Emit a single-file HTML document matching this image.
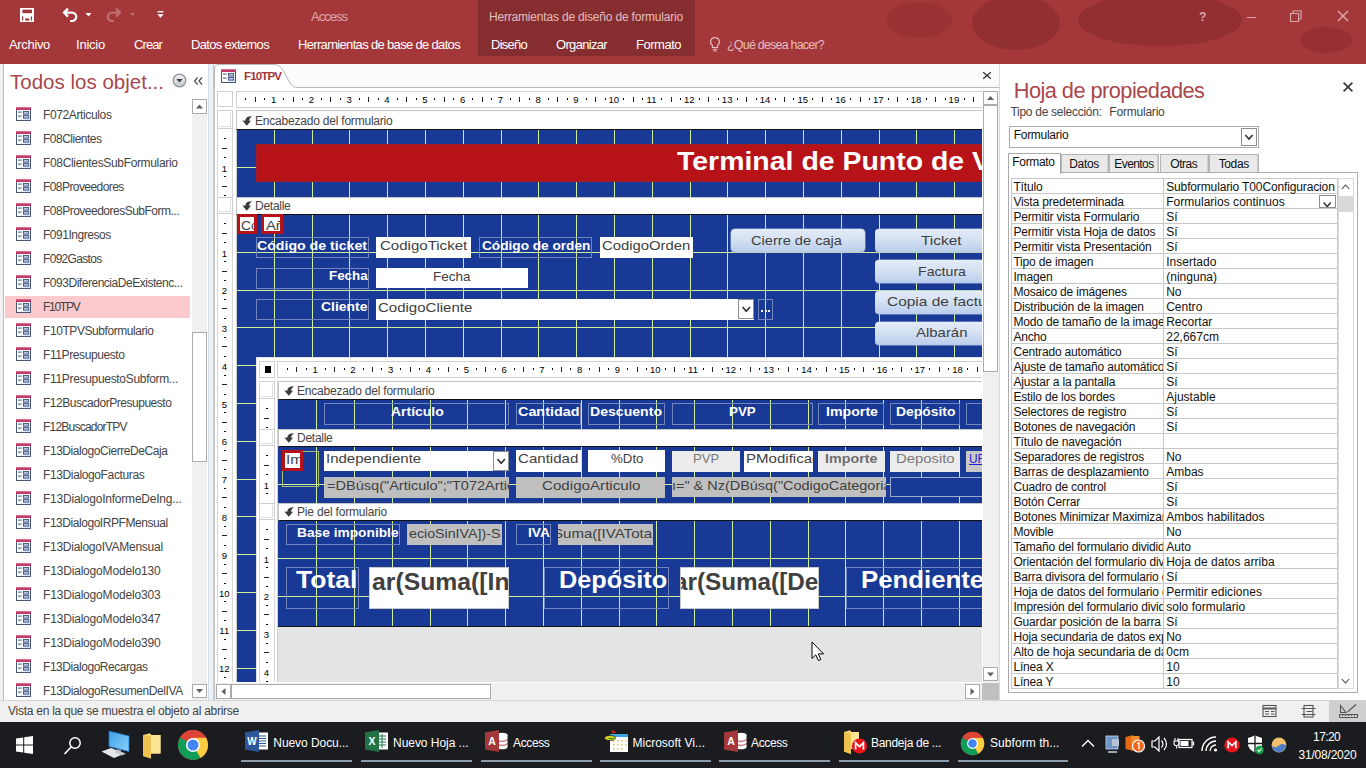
<!DOCTYPE html>
<html><head><meta charset="utf-8"><title>Access</title>
<style>
html,body{margin:0;padding:0;}
body{width:1366px;height:768px;overflow:hidden;position:relative;background:#fff;font-family:"Liberation Sans",sans-serif;}
div,span,svg{position:absolute;box-sizing:border-box;}
.t{white-space:nowrap;display:block;}
.clip{overflow:hidden;}
</style></head><body>

<svg width="0" height="0" style="left:0;top:0"><defs>
<linearGradient id="gfi" x1="0" y1="0" x2="1" y2="1"><stop offset="0" stop-color="#ffffff"/><stop offset="0.55" stop-color="#fbfcff"/><stop offset="1" stop-color="#c9daf2"/></linearGradient>
<symbol id="fi" viewBox="0 0 15 14">
<rect x="0.5" y="0.5" width="14" height="13" fill="url(#gfi)" stroke="#4a5573" stroke-width="1"/>
<rect x="0" y="0" width="15" height="3" fill="#c43a68"/>
<rect x="0" y="0" width="15" height="1" fill="#d9688d"/>
<rect x="2" y="4.6" width="3.6" height="1" fill="#44547c"/>
<rect x="2" y="8.6" width="3.6" height="1" fill="#44547c"/>
<rect x="7.5" y="4.5" width="5" height="2.6" fill="#b9c9e8" stroke="#44547c" stroke-width="0.9"/>
<rect x="7.5" y="8.5" width="5" height="2.6" fill="#b9c9e8" stroke="#44547c" stroke-width="0.9"/>
</symbol>
<symbol id="sel" viewBox="0 0 10 10">
<path d="M10 0.3 Q5.6 0 4 2.2 L3.1 4.7 L0.3 4.4 L4.8 9.7 L9.3 4.6 L7 4.9 Q7.2 1.8 10 0.3 Z" fill="#3b3b3b"/>
</symbol>
</defs></svg>
<div style="left:0px;top:0px;width:1366px;height:64px;background:#A4373A;"></div>
<div class="clip" style="left:860px;top:0;width:506px;height:57px;">
<div style="left:26px;top:2px;width:66px;height:36px;border-radius:50%;background:rgba(60,10,12,0.10);"></div>
<div style="left:112px;top:-4px;width:88px;height:54px;border-radius:50%;background:rgba(60,10,12,0.17);"></div>
<div style="left:218px;top:-6px;width:164px;height:52px;border-radius:50%;background:rgba(60,10,12,0.17);"></div>
<div style="left:440px;top:27px;width:52px;height:26px;border-radius:50%;background:rgba(60,10,12,0.13);"></div>
</div>
<div style="left:478px;top:0px;width:217px;height:56px;background:#862D30;"></div>
<svg style="left:0;top:0" width="200" height="32" viewBox="0 0 200 32">
<rect x="20" y="8" width="14" height="14" fill="#fff"/>
<rect x="22.4" y="9.6" width="9.6" height="3.6" fill="#A4373A"/>
<rect x="22" y="16.400" width="1.200" height="4.200" fill="#A4373A"/><rect x="30.800" y="16.400" width="1.200" height="4.200" fill="#A4373A"/>
<rect x="25.200" y="18.400" width="4" height="2.200" fill="#A4373A"/>
<path d="M68 8.6 L64 12.6 L68 16.6 M64.4 12.6 H72 a4.2 4.2 0 0 1 0 8.4 H70" fill="none" stroke="#fff" stroke-width="2.2"/>
<path d="M85.5 13 h6 l-3 3.4z" fill="#fff"/>
<g opacity="0.28"><path d="M116 8.6 L120 12.6 L116 16.6 M119.6 12.6 H112 a4.2 4.2 0 0 0 0 8.4 H114" fill="none" stroke="#fff" stroke-width="2.2"/>
<path d="M130 13 h5 l-2.5 3z" fill="#fff"/></g>
<rect x="157.5" y="11" width="6" height="1.4" fill="#fff"/>
<path d="M157.2 14.2 h6.6 l-3.3 3.6z" fill="#fff"/>
</svg>
<span class="t" style="font-size:13px;line-height:13px;color:#DDA9AB;letter-spacing:-0.983px;left:311.00px;top:9.85px;">Access</span>
<span class="t" style="font-size:12px;line-height:12px;color:#E3BEBF;letter-spacing:-0.188px;left:489.00px;top:11.19px;">Herramientas de diseño de formulario</span>
<span class="t" style="font-size:13px;line-height:13px;color:#fff;letter-spacing:-0.335px;left:9.00px;top:38.35px;">Archivo</span>
<span class="t" style="font-size:13px;line-height:13px;color:#fff;letter-spacing:-0.224px;left:76.00px;top:38.35px;">Inicio</span>
<span class="t" style="font-size:13px;line-height:13px;color:#fff;letter-spacing:-0.901px;left:134.00px;top:38.35px;">Crear</span>
<span class="t" style="font-size:13px;line-height:13px;color:#fff;letter-spacing:-0.674px;left:191.00px;top:38.35px;">Datos externos</span>
<span class="t" style="font-size:13px;line-height:13px;color:#fff;letter-spacing:-0.668px;left:298.00px;top:38.35px;">Herramientas de base de datos</span>
<span class="t" style="font-size:13px;line-height:13px;color:#fff;letter-spacing:-0.744px;left:491.00px;top:38.35px;">Diseño</span>
<span class="t" style="font-size:13px;line-height:13px;color:#fff;letter-spacing:-0.675px;left:556.00px;top:38.35px;">Organizar</span>
<span class="t" style="font-size:13px;line-height:13px;color:#fff;letter-spacing:-0.486px;left:636.00px;top:38.35px;">Formato</span>
<svg style="left:708px;top:36px" width="14" height="18" viewBox="0 0 14 18"><path d="M7 1.5 a4.3 4.3 0 0 1 2.6 7.8 v2.2 h-5.2 v-2.2 A4.3 4.3 0 0 1 7 1.5z M4.8 13.3 h4.4 M5.3 15 h3.4" fill="none" stroke="#E8C7C8" stroke-width="1.1"/></svg>
<span class="t" style="font-size:12.5px;line-height:12.5px;color:#E3BEBF;letter-spacing:-0.793px;left:727.00px;top:38.77px;">¿Qué desea hacer?</span>
<span class="t" style="font-size:12px;line-height:12px;color:#D9A6A8;font-weight:bold;left:1199.00px;top:11.19px;">?</span>
<div style="left:1246.5px;top:16.5px;width:9px;height:1.4px;background:#D9A6A8;"></div>
<svg style="left:1288px;top:8px" width="16" height="16" viewBox="0 0 16 16"><path d="M2.5 5.5 h8 v8 h-8z M5 5.3 V3 h8 v8 h-2.3" fill="none" stroke="#D9A6A8" stroke-width="1.2"/></svg>
<svg style="left:1336px;top:9px" width="14" height="14" viewBox="0 0 14 14"><path d="M2 2 L12 12 M12 2 L2 12" fill="none" stroke="#D9A6A8" stroke-width="1.5"/></svg>
<div style="left:0px;top:64px;width:214px;height:636px;background:#fff;"></div>
<div style="left:0px;top:64px;width:3px;height:636px;background:#F1F1F1;"></div>
<div style="left:3px;top:64px;width:1px;height:636px;background:#BDBDBD;"></div>
<span class="t" style="font-size:20.5px;line-height:20.5px;color:#A8474B;letter-spacing:0.009px;left:10.00px;top:72.30px;">Todos los objet...</span>
<svg style="left:172px;top:73px" width="15" height="15" viewBox="0 0 15 15"><defs><linearGradient id="gc" x1="0" y1="0" x2="0" y2="1"><stop offset="0" stop-color="#f4f4f7"/><stop offset="1" stop-color="#c3c6cf"/></linearGradient></defs><circle cx="7.5" cy="7.5" r="6.3" fill="url(#gc)" stroke="#8d9099" stroke-width="1.2"/><path d="M4.4 6 h6.2 l-3.1 3.6z" fill="#3c3c3c"/></svg>
<svg style="left:193px;top:76px" width="11" height="10" viewBox="0 0 11 10"><path d="M4.6 1.4 L1.6 5 L4.6 8.6 M9 1.4 L6 5 L9 8.6" fill="none" stroke="#444" stroke-width="1.2"/></svg>
<svg style="left:16px;top:107px" width="15" height="14"><use href="#fi"/></svg>
<span class="t" style="font-size:12px;line-height:12px;color:#444;letter-spacing:-0.374px;left:43.00px;top:109.19px;">F072Articulos</span>
<svg style="left:16px;top:131px" width="15" height="14"><use href="#fi"/></svg>
<span class="t" style="font-size:12px;line-height:12px;color:#444;letter-spacing:-0.503px;left:43.00px;top:133.19px;">F08Clientes</span>
<svg style="left:16px;top:155px" width="15" height="14"><use href="#fi"/></svg>
<span class="t" style="font-size:12px;line-height:12px;color:#444;letter-spacing:-0.339px;left:43.00px;top:157.19px;">F08ClientesSubFormulario</span>
<svg style="left:16px;top:179px" width="15" height="14"><use href="#fi"/></svg>
<span class="t" style="font-size:12px;line-height:12px;color:#444;letter-spacing:-0.573px;left:43.00px;top:181.19px;">F08Proveedores</span>
<svg style="left:16px;top:203px" width="15" height="14"><use href="#fi"/></svg>
<span class="t" style="font-size:12px;line-height:12px;color:#444;letter-spacing:-0.503px;left:43.00px;top:205.19px;">F08ProveedoresSubForm...</span>
<svg style="left:16px;top:227px" width="15" height="14"><use href="#fi"/></svg>
<span class="t" style="font-size:12px;line-height:12px;color:#444;letter-spacing:-0.473px;left:43.00px;top:229.19px;">F091Ingresos</span>
<svg style="left:16px;top:251px" width="15" height="14"><use href="#fi"/></svg>
<span class="t" style="font-size:12px;line-height:12px;color:#444;letter-spacing:-0.687px;left:43.00px;top:253.19px;">F092Gastos</span>
<svg style="left:16px;top:275px" width="15" height="14"><use href="#fi"/></svg>
<span class="t" style="font-size:12px;line-height:12px;color:#444;letter-spacing:-0.473px;left:43.00px;top:277.19px;">F093DiferenciaDeExistenc...</span>
<div style="left:5px;top:296px;width:185px;height:22px;background:#FCC9CD;"></div>
<svg style="left:16px;top:299px" width="15" height="14"><use href="#fi"/></svg>
<span class="t" style="font-size:12px;line-height:12px;color:#444;letter-spacing:-1.269px;left:43.00px;top:301.19px;">F10TPV</span>
<svg style="left:16px;top:323px" width="15" height="14"><use href="#fi"/></svg>
<span class="t" style="font-size:12px;line-height:12px;color:#444;letter-spacing:-0.427px;left:43.00px;top:325.19px;">F10TPVSubformulario</span>
<svg style="left:16px;top:347px" width="15" height="14"><use href="#fi"/></svg>
<span class="t" style="font-size:12px;line-height:12px;color:#444;letter-spacing:-0.404px;left:43.00px;top:349.19px;">F11Presupuesto</span>
<svg style="left:16px;top:371px" width="15" height="14"><use href="#fi"/></svg>
<span class="t" style="font-size:12px;line-height:12px;color:#444;letter-spacing:-0.317px;left:43.00px;top:373.19px;">F11PresupuestoSubform...</span>
<svg style="left:16px;top:395px" width="15" height="14"><use href="#fi"/></svg>
<span class="t" style="font-size:12px;line-height:12px;color:#444;letter-spacing:-0.470px;left:43.00px;top:397.19px;">F12BuscadorPresupuesto</span>
<svg style="left:16px;top:419px" width="15" height="14"><use href="#fi"/></svg>
<span class="t" style="font-size:12px;line-height:12px;color:#444;letter-spacing:-0.779px;left:43.00px;top:421.19px;">F12BuscadorTPV</span>
<svg style="left:16px;top:443px" width="15" height="14"><use href="#fi"/></svg>
<span class="t" style="font-size:12px;line-height:12px;color:#444;letter-spacing:-0.439px;left:43.00px;top:445.19px;">F13DialogoCierreDeCaja</span>
<svg style="left:16px;top:467px" width="15" height="14"><use href="#fi"/></svg>
<span class="t" style="font-size:12px;line-height:12px;color:#444;letter-spacing:-0.375px;left:43.00px;top:469.19px;">F13DialogoFacturas</span>
<svg style="left:16px;top:491px" width="15" height="14"><use href="#fi"/></svg>
<span class="t" style="font-size:12px;line-height:12px;color:#444;letter-spacing:-0.219px;left:43.00px;top:493.19px;">F13DialogoInformeDeIng...</span>
<svg style="left:16px;top:515px" width="15" height="14"><use href="#fi"/></svg>
<span class="t" style="font-size:12px;line-height:12px;color:#444;letter-spacing:-0.450px;left:43.00px;top:517.19px;">F13DialogoIRPFMensual</span>
<svg style="left:16px;top:539px" width="15" height="14"><use href="#fi"/></svg>
<span class="t" style="font-size:12px;line-height:12px;color:#444;letter-spacing:-0.269px;left:43.00px;top:541.19px;">F13DialogoIVAMensual</span>
<svg style="left:16px;top:563px" width="15" height="14"><use href="#fi"/></svg>
<span class="t" style="font-size:12px;line-height:12px;color:#444;letter-spacing:-0.176px;left:43.00px;top:565.19px;">F13DialogoModelo130</span>
<svg style="left:16px;top:587px" width="15" height="14"><use href="#fi"/></svg>
<span class="t" style="font-size:12px;line-height:12px;color:#444;letter-spacing:-0.176px;left:43.00px;top:589.19px;">F13DialogoModelo303</span>
<svg style="left:16px;top:611px" width="15" height="14"><use href="#fi"/></svg>
<span class="t" style="font-size:12px;line-height:12px;color:#444;letter-spacing:-0.176px;left:43.00px;top:613.19px;">F13DialogoModelo347</span>
<svg style="left:16px;top:635px" width="15" height="14"><use href="#fi"/></svg>
<span class="t" style="font-size:12px;line-height:12px;color:#444;letter-spacing:-0.176px;left:43.00px;top:637.19px;">F13DialogoModelo390</span>
<svg style="left:16px;top:659px" width="15" height="14"><use href="#fi"/></svg>
<span class="t" style="font-size:12px;line-height:12px;color:#444;letter-spacing:-0.451px;left:43.00px;top:661.19px;">F13DialogoRecargas</span>
<svg style="left:16px;top:683px" width="15" height="14"><use href="#fi"/></svg>
<span class="t" style="font-size:12px;line-height:12px;color:#444;letter-spacing:-0.408px;left:43.00px;top:685.19px;">F13DialogoResumenDelIVA</span>
<div style="left:192px;top:99px;width:15px;height:601px;background:#F0F0F0;"></div>
<div style="left:192px;top:99px;width:15px;height:15px;background:#fff;border:1px solid #ABABAB;"></div>
<svg style="left:192px;top:99px" width="15" height="15"><path d="M4 9.5 L7.5 5.5 L11 9.5z" fill="#606060"/></svg>
<div style="left:192px;top:332px;width:15px;height:130px;background:#fff;border:1px solid #ABABAB;"></div>
<div style="left:192px;top:684px;width:15px;height:14px;background:#fff;border:1px solid #ABABAB;"></div>
<svg style="left:192px;top:684px" width="15" height="14"><path d="M4 5 L7.5 9 L11 5z" fill="#606060"/></svg>
<div style="left:208px;top:64px;width:1px;height:636px;background:#D5DCE4;"></div>
<div style="left:209px;top:64px;width:4px;height:636px;background:#EEF2F7;"></div>
<div style="left:213px;top:64px;width:1px;height:636px;background:#C4CAD2;"></div>
<div style="left:214px;top:64px;width:786px;height:636px;background:#fff;"></div>
<div style="left:214px;top:64px;width:786px;height:24px;background:#FBFBFB;"></div>
<svg style="left:214px;top:64px" width="790" height="26" viewBox="0 0 790 26">
<path d="M0.5 26 V4 Q0.5 0.5 4 0.5 H60 Q66 0.5 69.5 7 L76 19 Q78.5 23.5 84 23.5 H786" fill="#fff" stroke="#B9B9B9" stroke-width="1"/>
<rect x="1" y="24" width="82" height="2" fill="#fff"/>
<path d="M0.5 26 V5" stroke="#B9B9B9"/>
</svg>
<svg style="left:221px;top:69px" width="15" height="14"><use href="#fi"/></svg>
<span class="t" style="font-size:11.5px;line-height:11.5px;color:#A23438;font-weight:bold;letter-spacing:-0.864px;left:244.00px;top:70.62px;">F10TPV</span>
<svg style="left:982px;top:70px" width="10" height="10" viewBox="0 0 10 10"><path d="M1.2 2.2 L8.8 8.8 M8.8 2.2 L1.2 8.8" stroke="#333" stroke-width="1.3"/></svg>
<div style="left:214px;top:88px;width:1px;height:612px;background:#C9C9C9;"></div>
<div style="left:217px;top:91px;width:16px;height:16px;background:#fff;border:1px solid #CFCFCF;"></div>
<div style="left:236px;top:91px;width:746px;height:17px;background:#fff;border:0;border-top:1px solid #CFCFCF;border-bottom:1px solid #CFCFCF;border-left:1px solid #CFCFCF;"></div>
<div style="left:244.8px;top:98.3px;width:1.7px;height:1.9px;background:#000;"></div>
<div style="left:255px;top:97px;width:1px;height:5px;background:#222;"></div>
<div style="left:263.8px;top:98.3px;width:1.7px;height:1.9px;background:#000;"></div>
<span class="t" style="font-size:9.5px;line-height:9.5px;color:#000;left:270.95px;top:95.31px;">1</span>
<div style="left:282.8px;top:98.3px;width:1.7px;height:1.9px;background:#000;"></div>
<div style="left:293px;top:97px;width:1px;height:5px;background:#222;"></div>
<div style="left:301.8px;top:98.3px;width:1.7px;height:1.9px;background:#000;"></div>
<span class="t" style="font-size:9.5px;line-height:9.5px;color:#000;left:308.75px;top:95.31px;">2</span>
<div style="left:320.8px;top:98.3px;width:1.7px;height:1.9px;background:#000;"></div>
<div style="left:330px;top:97px;width:1px;height:5px;background:#222;"></div>
<div style="left:339.8px;top:98.3px;width:1.7px;height:1.9px;background:#000;"></div>
<span class="t" style="font-size:9.5px;line-height:9.5px;color:#000;left:346.54px;top:95.31px;">3</span>
<div style="left:358.8px;top:98.3px;width:1.7px;height:1.9px;background:#000;"></div>
<div style="left:368px;top:97px;width:1px;height:5px;background:#222;"></div>
<div style="left:377.8px;top:98.3px;width:1.7px;height:1.9px;background:#000;"></div>
<span class="t" style="font-size:9.5px;line-height:9.5px;color:#000;left:384.34px;top:95.31px;">4</span>
<div style="left:396.8px;top:98.3px;width:1.7px;height:1.9px;background:#000;"></div>
<div style="left:406px;top:97px;width:1px;height:5px;background:#222;"></div>
<div style="left:415.8px;top:98.3px;width:1.7px;height:1.9px;background:#000;"></div>
<span class="t" style="font-size:9.5px;line-height:9.5px;color:#000;left:422.13px;top:95.31px;">5</span>
<div style="left:433.8px;top:98.3px;width:1.7px;height:1.9px;background:#000;"></div>
<div style="left:444px;top:97px;width:1px;height:5px;background:#222;"></div>
<div style="left:452.8px;top:98.3px;width:1.7px;height:1.9px;background:#000;"></div>
<span class="t" style="font-size:9.5px;line-height:9.5px;color:#000;left:459.93px;top:95.31px;">6</span>
<div style="left:471.8px;top:98.3px;width:1.7px;height:1.9px;background:#000;"></div>
<div style="left:482px;top:97px;width:1px;height:5px;background:#222;"></div>
<div style="left:490.8px;top:98.3px;width:1.7px;height:1.9px;background:#000;"></div>
<span class="t" style="font-size:9.5px;line-height:9.5px;color:#000;left:497.72px;top:95.31px;">7</span>
<div style="left:509.8px;top:98.3px;width:1.7px;height:1.9px;background:#000;"></div>
<div style="left:519px;top:97px;width:1px;height:5px;background:#222;"></div>
<div style="left:528.8px;top:98.3px;width:1.7px;height:1.9px;background:#000;"></div>
<span class="t" style="font-size:9.5px;line-height:9.5px;color:#000;left:535.52px;top:95.31px;">8</span>
<div style="left:547.8px;top:98.3px;width:1.7px;height:1.9px;background:#000;"></div>
<div style="left:557px;top:97px;width:1px;height:5px;background:#222;"></div>
<div style="left:566.8px;top:98.3px;width:1.7px;height:1.9px;background:#000;"></div>
<span class="t" style="font-size:9.5px;line-height:9.5px;color:#000;left:573.31px;top:95.31px;">9</span>
<div style="left:585.8px;top:98.3px;width:1.7px;height:1.9px;background:#000;"></div>
<div style="left:595px;top:97px;width:1px;height:5px;background:#222;"></div>
<div style="left:604.8px;top:98.3px;width:1.7px;height:1.9px;background:#000;"></div>
<span class="t" style="font-size:9.5px;line-height:9.5px;color:#000;left:608.47px;top:95.31px;">10</span>
<div style="left:622.8px;top:98.3px;width:1.7px;height:1.9px;background:#000;"></div>
<div style="left:633px;top:97px;width:1px;height:5px;background:#222;"></div>
<div style="left:641.8px;top:98.3px;width:1.7px;height:1.9px;background:#000;"></div>
<span class="t" style="font-size:9.5px;line-height:9.5px;color:#000;left:646.61px;top:95.31px;">11</span>
<div style="left:660.8px;top:98.3px;width:1.7px;height:1.9px;background:#000;"></div>
<div style="left:671px;top:97px;width:1px;height:5px;background:#222;"></div>
<div style="left:679.8px;top:98.3px;width:1.7px;height:1.9px;background:#000;"></div>
<span class="t" style="font-size:9.5px;line-height:9.5px;color:#000;left:684.06px;top:95.31px;">12</span>
<div style="left:698.8px;top:98.3px;width:1.7px;height:1.9px;background:#000;"></div>
<div style="left:708px;top:97px;width:1px;height:5px;background:#222;"></div>
<div style="left:717.8px;top:98.3px;width:1.7px;height:1.9px;background:#000;"></div>
<span class="t" style="font-size:9.5px;line-height:9.5px;color:#000;left:721.85px;top:95.31px;">13</span>
<div style="left:736.8px;top:98.3px;width:1.7px;height:1.9px;background:#000;"></div>
<div style="left:746px;top:97px;width:1px;height:5px;background:#222;"></div>
<div style="left:755.8px;top:98.3px;width:1.7px;height:1.9px;background:#000;"></div>
<span class="t" style="font-size:9.5px;line-height:9.5px;color:#000;left:759.65px;top:95.31px;">14</span>
<div style="left:774.8px;top:98.3px;width:1.7px;height:1.9px;background:#000;"></div>
<div style="left:784px;top:97px;width:1px;height:5px;background:#222;"></div>
<div style="left:792.8px;top:98.3px;width:1.7px;height:1.9px;background:#000;"></div>
<span class="t" style="font-size:9.5px;line-height:9.5px;color:#000;left:797.44px;top:95.31px;">15</span>
<div style="left:811.8px;top:98.3px;width:1.7px;height:1.9px;background:#000;"></div>
<div style="left:822px;top:97px;width:1px;height:5px;background:#222;"></div>
<div style="left:830.8px;top:98.3px;width:1.7px;height:1.9px;background:#000;"></div>
<span class="t" style="font-size:9.5px;line-height:9.5px;color:#000;left:835.24px;top:95.31px;">16</span>
<div style="left:849.8px;top:98.3px;width:1.7px;height:1.9px;background:#000;"></div>
<div style="left:860px;top:97px;width:1px;height:5px;background:#222;"></div>
<div style="left:868.8px;top:98.3px;width:1.7px;height:1.9px;background:#000;"></div>
<span class="t" style="font-size:9.5px;line-height:9.5px;color:#000;left:873.03px;top:95.31px;">17</span>
<div style="left:887.8px;top:98.3px;width:1.7px;height:1.9px;background:#000;"></div>
<div style="left:897px;top:97px;width:1px;height:5px;background:#222;"></div>
<div style="left:906.8px;top:98.3px;width:1.7px;height:1.9px;background:#000;"></div>
<span class="t" style="font-size:9.5px;line-height:9.5px;color:#000;left:910.83px;top:95.31px;">18</span>
<div style="left:925.8px;top:98.3px;width:1.7px;height:1.9px;background:#000;"></div>
<div style="left:935px;top:97px;width:1px;height:5px;background:#222;"></div>
<div style="left:944.8px;top:98.3px;width:1.7px;height:1.9px;background:#000;"></div>
<span class="t" style="font-size:9.5px;line-height:9.5px;color:#000;left:948.62px;top:95.31px;">19</span>
<div style="left:963.8px;top:98.3px;width:1.7px;height:1.9px;background:#000;"></div>
<div style="left:973px;top:97px;width:1px;height:5px;background:#222;"></div>
<div style="left:217px;top:110px;width:16px;height:572px;background:#fff;border:0;border-left:1px solid #D6D6D6;border-right:1px solid #D6D6D6;"></div>
<div style="left:217px;top:110px;width:16px;height:19px;background:#fff;border:1px solid #CFCFCF;"></div>
<div style="left:219px;top:112px;width:12px;height:15px;background:#fff;border:0;border-right:1px solid #DDD;border-bottom:1px solid #DDD;"></div>
<div style="left:217px;top:197px;width:16px;height:17px;background:#fff;border:1px solid #CFCFCF;"></div>
<div style="left:219px;top:199px;width:12px;height:13px;background:#fff;border:0;border-right:1px solid #DDD;border-bottom:1px solid #DDD;"></div>
<div style="left:223.8px;top:137.8px;width:1.8px;height:1.7px;background:#000;"></div>
<div style="left:222px;top:148px;width:5px;height:1px;background:#222;"></div>
<div style="left:223.8px;top:156.8px;width:1.8px;height:1.7px;background:#000;"></div>
<span class="t" style="font-size:9.5px;line-height:9.5px;color:#000;left:221.66px;top:163.50px;">1</span>
<div style="left:223.8px;top:175.8px;width:1.8px;height:1.7px;background:#000;"></div>
<div style="left:222px;top:186px;width:5px;height:1px;background:#222;"></div>
<div style="left:223.8px;top:194.8px;width:1.8px;height:1.7px;background:#000;"></div>
<div style="left:223.8px;top:222.8px;width:1.8px;height:1.7px;background:#000;"></div>
<div style="left:222px;top:233px;width:5px;height:1px;background:#222;"></div>
<div style="left:223.8px;top:241.8px;width:1.8px;height:1.7px;background:#000;"></div>
<span class="t" style="font-size:9.5px;line-height:9.5px;color:#000;left:221.66px;top:248.50px;">1</span>
<div style="left:223.8px;top:260.8px;width:1.8px;height:1.7px;background:#000;"></div>
<div style="left:222px;top:271px;width:5px;height:1px;background:#222;"></div>
<div style="left:223.8px;top:279.8px;width:1.8px;height:1.7px;background:#000;"></div>
<span class="t" style="font-size:9.5px;line-height:9.5px;color:#000;left:221.66px;top:286.30px;">2</span>
<div style="left:223.8px;top:298.8px;width:1.8px;height:1.7px;background:#000;"></div>
<div style="left:222px;top:308px;width:5px;height:1px;background:#222;"></div>
<div style="left:223.8px;top:317.8px;width:1.8px;height:1.7px;background:#000;"></div>
<span class="t" style="font-size:9.5px;line-height:9.5px;color:#000;left:221.66px;top:324.09px;">3</span>
<div style="left:223.8px;top:336.8px;width:1.8px;height:1.7px;background:#000;"></div>
<div style="left:222px;top:346px;width:5px;height:1px;background:#222;"></div>
<div style="left:223.8px;top:355.8px;width:1.8px;height:1.7px;background:#000;"></div>
<span class="t" style="font-size:9.5px;line-height:9.5px;color:#000;left:221.66px;top:361.89px;">4</span>
<div style="left:223.8px;top:374.8px;width:1.8px;height:1.7px;background:#000;"></div>
<div style="left:222px;top:384px;width:5px;height:1px;background:#222;"></div>
<div style="left:223.8px;top:393.8px;width:1.8px;height:1.7px;background:#000;"></div>
<span class="t" style="font-size:9.5px;line-height:9.5px;color:#000;left:221.66px;top:399.68px;">5</span>
<div style="left:223.8px;top:411.8px;width:1.8px;height:1.7px;background:#000;"></div>
<div style="left:222px;top:422px;width:5px;height:1px;background:#222;"></div>
<div style="left:223.8px;top:430.8px;width:1.8px;height:1.7px;background:#000;"></div>
<span class="t" style="font-size:9.5px;line-height:9.5px;color:#000;left:221.66px;top:437.48px;">6</span>
<div style="left:223.8px;top:449.8px;width:1.8px;height:1.7px;background:#000;"></div>
<div style="left:222px;top:460px;width:5px;height:1px;background:#222;"></div>
<div style="left:223.8px;top:468.8px;width:1.8px;height:1.7px;background:#000;"></div>
<span class="t" style="font-size:9.5px;line-height:9.5px;color:#000;left:221.66px;top:475.27px;">7</span>
<div style="left:223.8px;top:487.8px;width:1.8px;height:1.7px;background:#000;"></div>
<div style="left:222px;top:497px;width:5px;height:1px;background:#222;"></div>
<div style="left:223.8px;top:506.8px;width:1.8px;height:1.7px;background:#000;"></div>
<span class="t" style="font-size:9.5px;line-height:9.5px;color:#000;left:221.66px;top:513.07px;">8</span>
<div style="left:223.8px;top:525.8px;width:1.8px;height:1.7px;background:#000;"></div>
<div style="left:222px;top:535px;width:5px;height:1px;background:#222;"></div>
<div style="left:223.8px;top:544.8px;width:1.8px;height:1.7px;background:#000;"></div>
<span class="t" style="font-size:9.5px;line-height:9.5px;color:#000;left:221.66px;top:550.86px;">9</span>
<div style="left:223.8px;top:563.8px;width:1.8px;height:1.7px;background:#000;"></div>
<div style="left:222px;top:573px;width:5px;height:1px;background:#222;"></div>
<div style="left:223.8px;top:582.8px;width:1.8px;height:1.7px;background:#000;"></div>
<span class="t" style="font-size:9.5px;line-height:9.5px;color:#000;left:219.02px;top:588.66px;">10</span>
<div style="left:223.8px;top:600.8px;width:1.8px;height:1.7px;background:#000;"></div>
<div style="left:222px;top:611px;width:5px;height:1px;background:#222;"></div>
<div style="left:223.8px;top:619.8px;width:1.8px;height:1.7px;background:#000;"></div>
<span class="t" style="font-size:9.5px;line-height:9.5px;color:#000;left:219.37px;top:626.45px;">11</span>
<div style="left:223.8px;top:638.8px;width:1.8px;height:1.7px;background:#000;"></div>
<div style="left:222px;top:649px;width:5px;height:1px;background:#222;"></div>
<div style="left:223.8px;top:657.8px;width:1.8px;height:1.7px;background:#000;"></div>
<span class="t" style="font-size:9.5px;line-height:9.5px;color:#000;left:219.02px;top:664.25px;">12</span>
<div style="left:223.8px;top:676.8px;width:1.8px;height:1.7px;background:#000;"></div>
<div style="left:236px;top:110px;width:1px;height:572px;background:#CFCFCF;"></div>
<div class="clip" style="left:237px;top:129px;width:745px;height:68px;background:#183A96;"><div style="left:37px;top:0;width:1px;height:100%;background:#D2F09C;"></div><div style="left:75px;top:0;width:1px;height:100%;background:#D2F09C;"></div><div style="left:112px;top:0;width:1px;height:100%;background:#D2F09C;"></div><div style="left:150px;top:0;width:1px;height:100%;background:#D2F09C;"></div><div style="left:188px;top:0;width:1px;height:100%;background:#D2F09C;"></div><div style="left:226px;top:0;width:1px;height:100%;background:#D2F09C;"></div><div style="left:264px;top:0;width:1px;height:100%;background:#D2F09C;"></div><div style="left:301px;top:0;width:1px;height:100%;background:#D2F09C;"></div><div style="left:339px;top:0;width:1px;height:100%;background:#D2F09C;"></div><div style="left:377px;top:0;width:1px;height:100%;background:#D2F09C;"></div><div style="left:415px;top:0;width:1px;height:100%;background:#D2F09C;"></div><div style="left:453px;top:0;width:1px;height:100%;background:#D2F09C;"></div><div style="left:490px;top:0;width:1px;height:100%;background:#D2F09C;"></div><div style="left:528px;top:0;width:1px;height:100%;background:#D2F09C;"></div><div style="left:566px;top:0;width:1px;height:100%;background:#D2F09C;"></div><div style="left:604px;top:0;width:1px;height:100%;background:#D2F09C;"></div><div style="left:642px;top:0;width:1px;height:100%;background:#D2F09C;"></div><div style="left:679px;top:0;width:1px;height:100%;background:#D2F09C;"></div><div style="left:717px;top:0;width:1px;height:100%;background:#D2F09C;"></div><div style="left:0;top:38px;width:100%;height:1px;background:#D2F09C;"></div></div>
<div class="clip" style="left:237px;top:214px;width:745px;height:468px;background:#183A96;"><div style="left:37px;top:0;width:1px;height:100%;background:#D2F09C;"></div><div style="left:75px;top:0;width:1px;height:100%;background:#D2F09C;"></div><div style="left:112px;top:0;width:1px;height:100%;background:#D2F09C;"></div><div style="left:150px;top:0;width:1px;height:100%;background:#D2F09C;"></div><div style="left:188px;top:0;width:1px;height:100%;background:#D2F09C;"></div><div style="left:226px;top:0;width:1px;height:100%;background:#D2F09C;"></div><div style="left:264px;top:0;width:1px;height:100%;background:#D2F09C;"></div><div style="left:301px;top:0;width:1px;height:100%;background:#D2F09C;"></div><div style="left:339px;top:0;width:1px;height:100%;background:#D2F09C;"></div><div style="left:377px;top:0;width:1px;height:100%;background:#D2F09C;"></div><div style="left:415px;top:0;width:1px;height:100%;background:#D2F09C;"></div><div style="left:453px;top:0;width:1px;height:100%;background:#D2F09C;"></div><div style="left:490px;top:0;width:1px;height:100%;background:#D2F09C;"></div><div style="left:528px;top:0;width:1px;height:100%;background:#D2F09C;"></div><div style="left:566px;top:0;width:1px;height:100%;background:#D2F09C;"></div><div style="left:604px;top:0;width:1px;height:100%;background:#D2F09C;"></div><div style="left:642px;top:0;width:1px;height:100%;background:#D2F09C;"></div><div style="left:679px;top:0;width:1px;height:100%;background:#D2F09C;"></div><div style="left:717px;top:0;width:1px;height:100%;background:#D2F09C;"></div><div style="left:0;top:38px;width:100%;height:1px;background:#D2F09C;"></div><div style="left:0;top:76px;width:100%;height:1px;background:#D2F09C;"></div><div style="left:0;top:113px;width:100%;height:1px;background:#D2F09C;"></div><div style="left:0;top:151px;width:100%;height:1px;background:#D2F09C;"></div><div style="left:0;top:189px;width:100%;height:1px;background:#D2F09C;"></div><div style="left:0;top:227px;width:100%;height:1px;background:#D2F09C;"></div><div style="left:0;top:265px;width:100%;height:1px;background:#D2F09C;"></div><div style="left:0;top:302px;width:100%;height:1px;background:#D2F09C;"></div><div style="left:0;top:340px;width:100%;height:1px;background:#D2F09C;"></div><div style="left:0;top:378px;width:100%;height:1px;background:#D2F09C;"></div><div style="left:0;top:416px;width:100%;height:1px;background:#D2F09C;"></div><div style="left:0;top:454px;width:100%;height:1px;background:#D2F09C;"></div></div>
<div style="left:236px;top:110px;width:746px;height:20px;background:#fff;border:0;border-top:1px solid #C6C6C6;border-left:1px solid #C6C6C6;border-bottom:1px solid #111;"></div>
<svg style="left:241.5px;top:115.9px" width="10" height="10"><use href="#sel"/></svg>
<span class="t" style="font-size:12px;line-height:12px;color:#444;letter-spacing:-0.210px;left:255.00px;top:115.09px;">Encabezado del formulario</span>
<div style="left:236px;top:197px;width:746px;height:18px;background:#fff;border:0;border-top:1px solid #C6C6C6;border-left:1px solid #C6C6C6;border-bottom:1px solid #111;"></div>
<svg style="left:241.5px;top:200.9px" width="10" height="10"><use href="#sel"/></svg>
<span class="t" style="font-size:12px;line-height:12px;color:#444;letter-spacing:-0.265px;left:255.00px;top:200.09px;">Detalle</span>
<div class="clip" style="left:256px;top:144px;width:726px;height:38px;background:#B71218;box-shadow:inset 0 0 0 1px rgba(140,40,50,0.6);">
<span class="t" style="font-size:26.5px;line-height:26.5px;color:#fff;font-weight:bold;transform-origin:0 0;transform:scaleX(1.0737);left:420.50px;top:3.52px;">Terminal de Punto de Venta</span>
</div>
<div class="clip" style="left:237px;top:214px;width:20px;height:20px;background:#fff;border:3px solid #B71218;">
<span class="t" style="font-size:13.3px;line-height:13.3px;color:#404040;transform-origin:0 0;transform:scaleX(1.0293);left:0.50px;top:1.59px;">Co</span>
</div>
<div class="clip" style="left:261px;top:214px;width:22px;height:20px;background:#fff;border:3px solid #B71218;">
<span class="t" style="font-size:13.3px;line-height:13.3px;color:#404040;transform-origin:0 0;transform:scaleX(1.1065);left:1.50px;top:1.59px;">Añ</span>
</div>
<div style="left:255.5px;top:237px;width:113.5px;height:21px;border:1px solid #7485BE;"></div>
<span class="t" style="font-size:13.3px;line-height:13.3px;color:#fff;font-weight:bold;transform-origin:0 0;transform:scaleX(1.0633);left:257.00px;top:239.09px;">Código de ticket</span>
<div style="left:376px;top:237px;width:95px;height:21px;background:#fff;"></div>
<span class="t" style="font-size:13.3px;line-height:13.3px;color:#404040;transform-origin:0 0;transform:scaleX(1.1307);left:379.80px;top:239.49px;">CodigoTicket</span>
<div style="left:478.5px;top:237px;width:113px;height:21px;border:1px solid #7485BE;"></div>
<span class="t" style="font-size:13.3px;line-height:13.3px;color:#fff;font-weight:bold;transform-origin:0 0;transform:scaleX(1.0260);left:482.30px;top:239.09px;">Código de orden</span>
<div style="left:599.5px;top:237px;width:93.5px;height:21px;background:#fff;"></div>
<span class="t" style="font-size:13.3px;line-height:13.3px;color:#404040;transform-origin:0 0;transform:scaleX(1.1161);left:602.40px;top:239.49px;">CodigoOrden</span>
<div style="left:255.5px;top:267.5px;width:113.5px;height:21px;border:1px solid #7485BE;"></div>
<span class="t" style="font-size:13.3px;line-height:13.3px;color:#fff;font-weight:bold;transform-origin:0 0;transform:scaleX(1.0042);left:328.60px;top:269.09px;">Fecha</span>
<div style="left:376px;top:267.5px;width:152px;height:20.5px;background:#fff;"></div>
<span class="t" style="font-size:13.3px;line-height:13.3px;color:#404040;transform-origin:0 0;transform:scaleX(1.0145);left:432.50px;top:269.59px;">Fecha</span>
<div style="left:255.5px;top:298.5px;width:113.5px;height:21px;border:1px solid #7485BE;"></div>
<span class="t" style="font-size:13.3px;line-height:13.3px;color:#fff;font-weight:bold;transform-origin:0 0;transform:scaleX(1.0487);left:320.70px;top:299.89px;">Cliente</span>
<div style="left:376px;top:298.5px;width:378px;height:21px;background:#fff;"></div>
<span class="t" style="font-size:13.3px;line-height:13.3px;color:#404040;transform-origin:0 0;transform:scaleX(1.1287);left:378.40px;top:301.09px;">CodigoCliente</span>
<div style="left:737.5px;top:299px;width:16.5px;height:20px;background:#fff;border:1px solid #8E8E8E;"></div>
<svg style="left:737.5px;top:299px" width="16.5" height="20" viewBox="0 0 16 20"><path d="M4.3 8 L8 12.2 L11.7 8" fill="none" stroke="#333" stroke-width="1.7"/></svg>
<div style="left:757.7px;top:299px;width:15px;height:20.5px;border:1px solid #7485BE;"></div>
<div style="left:761px;top:310px;width:2px;height:2px;background:#fff;"></div>
<div style="left:764.6px;top:310px;width:2px;height:2px;background:#fff;"></div>
<div style="left:768.2px;top:310px;width:2px;height:2px;background:#fff;"></div>
<div class="clip" style="left:730.6px;top:229px;width:134.3px;height:23px;border-radius:4px;background:linear-gradient(#E3EBF7 0%,#D5E1F3 45%,#B9CDEB 100%);box-shadow:0 0 0 0.5px #9fb3d8;"></div>
<span class="t" style="font-size:13.3px;line-height:13.3px;color:#404040;transform-origin:0 0;transform:scaleX(1.0991);left:751.00px;top:234.09px;">Cierre de caja</span>
<div class="clip" style="left:875px;top:225px;width:107px;height:125px;">
<div class="clip" style="left:0.4px;top:4px;width:134px;height:23px;border-radius:4px;background:linear-gradient(#E3EBF7 0%,#D5E1F3 45%,#B9CDEB 100%);box-shadow:0 0 0 0.5px #9fb3d8;"></div>
<span class="t" style="font-size:13.3px;line-height:13.3px;color:#404040;transform-origin:0 0;transform:scaleX(1.1579);left:46.00px;top:9.09px;">Ticket</span>
<div class="clip" style="left:0.4px;top:35px;width:134px;height:22.6px;border-radius:4px;background:linear-gradient(#E3EBF7 0%,#D5E1F3 45%,#B9CDEB 100%);box-shadow:0 0 0 0.5px #9fb3d8;"></div>
<span class="t" style="font-size:13.3px;line-height:13.3px;color:#404040;transform-origin:0 0;transform:scaleX(1.0646);left:42.50px;top:40.09px;">Factura</span>
<div class="clip" style="left:0.4px;top:66px;width:134px;height:22.5px;border-radius:4px;background:linear-gradient(#E3EBF7 0%,#D5E1F3 45%,#B9CDEB 100%);box-shadow:0 0 0 0.5px #9fb3d8;"></div>
<span class="t" style="font-size:13.3px;line-height:13.3px;color:#404040;transform-origin:0 0;transform:scaleX(1.1630);left:11.50px;top:70.09px;">Copia de factura</span>
<div class="clip" style="left:0.4px;top:96.6px;width:134px;height:23px;border-radius:4px;background:linear-gradient(#E3EBF7 0%,#D5E1F3 45%,#B9CDEB 100%);box-shadow:0 0 0 0.5px #9fb3d8;"></div>
<span class="t" style="font-size:13.3px;line-height:13.3px;color:#404040;transform-origin:0 0;transform:scaleX(1.1234);left:40.50px;top:101.09px;">Albarán</span>
</div>
<div class="clip" style="left:256px;top:357px;width:726px;height:325px;background:#fff;border-left:1px solid #E3E3E3;border-top:1px solid #E3E3E3;"></div>
<div style="left:259px;top:361px;width:16px;height:17px;background:#fff;border:1px solid #CFCFCF;"></div>
<div style="left:264.5px;top:366px;width:6px;height:6.5px;background:#000;"></div>
<div style="left:277px;top:361px;width:705px;height:17px;background:#fff;border:0;border-top:1px solid #CFCFCF;border-bottom:1px solid #CFCFCF;border-left:1px solid #CFCFCF;"></div>
<div class="clip" style="left:277px;top:361px;width:705px;height:17px;">
<div style="left:9.8px;top:7.3px;width:1.7px;height:1.9px;background:#000;"></div>
<div style="left:19px;top:6px;width:1px;height:5px;background:#222;"></div>
<div style="left:28.8px;top:7.3px;width:1.7px;height:1.9px;background:#000;"></div>
<span class="t" style="font-size:9.5px;line-height:9.5px;color:#000;left:35.45px;top:4.31px;">1</span>
<div style="left:47.8px;top:7.3px;width:1.7px;height:1.9px;background:#000;"></div>
<div style="left:57px;top:6px;width:1px;height:5px;background:#222;"></div>
<div style="left:66.8px;top:7.3px;width:1.7px;height:1.9px;background:#000;"></div>
<span class="t" style="font-size:9.5px;line-height:9.5px;color:#000;left:73.25px;top:4.31px;">2</span>
<div style="left:85.8px;top:7.3px;width:1.7px;height:1.9px;background:#000;"></div>
<div style="left:95px;top:6px;width:1px;height:5px;background:#222;"></div>
<div style="left:103.8px;top:7.3px;width:1.7px;height:1.9px;background:#000;"></div>
<span class="t" style="font-size:9.5px;line-height:9.5px;color:#000;left:111.04px;top:4.31px;">3</span>
<div style="left:122.8px;top:7.3px;width:1.7px;height:1.9px;background:#000;"></div>
<div style="left:133px;top:6px;width:1px;height:5px;background:#222;"></div>
<div style="left:141.8px;top:7.3px;width:1.7px;height:1.9px;background:#000;"></div>
<span class="t" style="font-size:9.5px;line-height:9.5px;color:#000;left:148.84px;top:4.31px;">4</span>
<div style="left:160.8px;top:7.3px;width:1.7px;height:1.9px;background:#000;"></div>
<div style="left:171px;top:6px;width:1px;height:5px;background:#222;"></div>
<div style="left:179.8px;top:7.3px;width:1.7px;height:1.9px;background:#000;"></div>
<span class="t" style="font-size:9.5px;line-height:9.5px;color:#000;left:186.63px;top:4.31px;">5</span>
<div style="left:198.8px;top:7.3px;width:1.7px;height:1.9px;background:#000;"></div>
<div style="left:208px;top:6px;width:1px;height:5px;background:#222;"></div>
<div style="left:217.8px;top:7.3px;width:1.7px;height:1.9px;background:#000;"></div>
<span class="t" style="font-size:9.5px;line-height:9.5px;color:#000;left:224.43px;top:4.31px;">6</span>
<div style="left:236.8px;top:7.3px;width:1.7px;height:1.9px;background:#000;"></div>
<div style="left:246px;top:6px;width:1px;height:5px;background:#222;"></div>
<div style="left:255.8px;top:7.3px;width:1.7px;height:1.9px;background:#000;"></div>
<span class="t" style="font-size:9.5px;line-height:9.5px;color:#000;left:262.22px;top:4.31px;">7</span>
<div style="left:274.8px;top:7.3px;width:1.7px;height:1.9px;background:#000;"></div>
<div style="left:284px;top:6px;width:1px;height:5px;background:#222;"></div>
<div style="left:292.8px;top:7.3px;width:1.7px;height:1.9px;background:#000;"></div>
<span class="t" style="font-size:9.5px;line-height:9.5px;color:#000;left:300.02px;top:4.31px;">8</span>
<div style="left:311.8px;top:7.3px;width:1.7px;height:1.9px;background:#000;"></div>
<div style="left:322px;top:6px;width:1px;height:5px;background:#222;"></div>
<div style="left:330.8px;top:7.3px;width:1.7px;height:1.9px;background:#000;"></div>
<span class="t" style="font-size:9.5px;line-height:9.5px;color:#000;left:337.81px;top:4.31px;">9</span>
<div style="left:349.8px;top:7.3px;width:1.7px;height:1.9px;background:#000;"></div>
<div style="left:360px;top:6px;width:1px;height:5px;background:#222;"></div>
<div style="left:368.8px;top:7.3px;width:1.7px;height:1.9px;background:#000;"></div>
<span class="t" style="font-size:9.5px;line-height:9.5px;color:#000;left:372.97px;top:4.31px;">10</span>
<div style="left:387.8px;top:7.3px;width:1.7px;height:1.9px;background:#000;"></div>
<div style="left:397px;top:6px;width:1px;height:5px;background:#222;"></div>
<div style="left:406.8px;top:7.3px;width:1.7px;height:1.9px;background:#000;"></div>
<span class="t" style="font-size:9.5px;line-height:9.5px;color:#000;left:411.11px;top:4.31px;">11</span>
<div style="left:425.8px;top:7.3px;width:1.7px;height:1.9px;background:#000;"></div>
<div style="left:435px;top:6px;width:1px;height:5px;background:#222;"></div>
<div style="left:444.8px;top:7.3px;width:1.7px;height:1.9px;background:#000;"></div>
<span class="t" style="font-size:9.5px;line-height:9.5px;color:#000;left:448.56px;top:4.31px;">12</span>
<div style="left:462.8px;top:7.3px;width:1.7px;height:1.9px;background:#000;"></div>
<div style="left:473px;top:6px;width:1px;height:5px;background:#222;"></div>
<div style="left:481.8px;top:7.3px;width:1.7px;height:1.9px;background:#000;"></div>
<span class="t" style="font-size:9.5px;line-height:9.5px;color:#000;left:486.35px;top:4.31px;">13</span>
<div style="left:500.8px;top:7.3px;width:1.7px;height:1.9px;background:#000;"></div>
<div style="left:511px;top:6px;width:1px;height:5px;background:#222;"></div>
<div style="left:519.8px;top:7.3px;width:1.7px;height:1.9px;background:#000;"></div>
<span class="t" style="font-size:9.5px;line-height:9.5px;color:#000;left:524.15px;top:4.31px;">14</span>
<div style="left:538.8px;top:7.3px;width:1.7px;height:1.9px;background:#000;"></div>
<div style="left:549px;top:6px;width:1px;height:5px;background:#222;"></div>
<div style="left:557.8px;top:7.3px;width:1.7px;height:1.9px;background:#000;"></div>
<span class="t" style="font-size:9.5px;line-height:9.5px;color:#000;left:561.94px;top:4.31px;">15</span>
<div style="left:576.8px;top:7.3px;width:1.7px;height:1.9px;background:#000;"></div>
<div style="left:586px;top:6px;width:1px;height:5px;background:#222;"></div>
<div style="left:595.8px;top:7.3px;width:1.7px;height:1.9px;background:#000;"></div>
<span class="t" style="font-size:9.5px;line-height:9.5px;color:#000;left:599.74px;top:4.31px;">16</span>
<div style="left:614.8px;top:7.3px;width:1.7px;height:1.9px;background:#000;"></div>
<div style="left:624px;top:6px;width:1px;height:5px;background:#222;"></div>
<div style="left:633.8px;top:7.3px;width:1.7px;height:1.9px;background:#000;"></div>
<span class="t" style="font-size:9.5px;line-height:9.5px;color:#000;left:637.53px;top:4.31px;">17</span>
<div style="left:651.8px;top:7.3px;width:1.7px;height:1.9px;background:#000;"></div>
<div style="left:662px;top:6px;width:1px;height:5px;background:#222;"></div>
<div style="left:670.8px;top:7.3px;width:1.7px;height:1.9px;background:#000;"></div>
<span class="t" style="font-size:9.5px;line-height:9.5px;color:#000;left:675.33px;top:4.31px;">18</span>
<div style="left:689.8px;top:7.3px;width:1.7px;height:1.9px;background:#000;"></div>
<div style="left:700px;top:6px;width:1px;height:5px;background:#222;"></div>
</div>
<div style="left:259px;top:381px;width:16px;height:301px;background:#fff;border:0;border-left:1px solid #D6D6D6;border-right:1px solid #D6D6D6;"></div>
<div style="left:259px;top:381px;width:16px;height:18px;background:#fff;border:1px solid #CFCFCF;"></div>
<div style="left:261px;top:383px;width:12px;height:14px;background:#fff;border:0;border-right:1px solid #DDD;border-bottom:1px solid #DDD;"></div>
<div style="left:259px;top:429px;width:16px;height:17px;background:#fff;border:1px solid #CFCFCF;"></div>
<div style="left:261px;top:431px;width:12px;height:13px;background:#fff;border:0;border-right:1px solid #DDD;border-bottom:1px solid #DDD;"></div>
<div style="left:259px;top:503px;width:16px;height:17px;background:#fff;border:1px solid #CFCFCF;"></div>
<div style="left:261px;top:505px;width:12px;height:13px;background:#fff;border:0;border-right:1px solid #DDD;border-bottom:1px solid #DDD;"></div>
<div style="left:265.8px;top:407.8px;width:1.8px;height:1.7px;background:#000;"></div>
<div style="left:264px;top:418px;width:5px;height:1px;background:#222;"></div>
<div style="left:265.8px;top:426.8px;width:1.8px;height:1.7px;background:#000;"></div>
<div style="left:265.8px;top:454.8px;width:1.8px;height:1.7px;background:#000;"></div>
<div style="left:264px;top:465px;width:5px;height:1px;background:#222;"></div>
<div style="left:265.8px;top:473.8px;width:1.8px;height:1.7px;background:#000;"></div>
<span class="t" style="font-size:9.5px;line-height:9.5px;color:#000;left:263.66px;top:480.50px;">1</span>
<div style="left:265.8px;top:492.8px;width:1.8px;height:1.7px;background:#000;"></div>
<div style="left:265.8px;top:528.8px;width:1.8px;height:1.7px;background:#000;"></div>
<div style="left:264px;top:539px;width:5px;height:1px;background:#222;"></div>
<div style="left:265.8px;top:547.8px;width:1.8px;height:1.7px;background:#000;"></div>
<span class="t" style="font-size:9.5px;line-height:9.5px;color:#000;left:263.66px;top:554.50px;">1</span>
<div style="left:265.8px;top:566.8px;width:1.8px;height:1.7px;background:#000;"></div>
<div style="left:264px;top:577px;width:5px;height:1px;background:#222;"></div>
<div style="left:265.8px;top:585.8px;width:1.8px;height:1.7px;background:#000;"></div>
<span class="t" style="font-size:9.5px;line-height:9.5px;color:#000;left:263.66px;top:592.30px;">2</span>
<div style="left:265.8px;top:604.8px;width:1.8px;height:1.7px;background:#000;"></div>
<div style="left:264px;top:614px;width:5px;height:1px;background:#222;"></div>
<div style="left:265.8px;top:623.8px;width:1.8px;height:1.7px;background:#000;"></div>
<span class="t" style="font-size:9.5px;line-height:9.5px;color:#000;left:263.66px;top:630.09px;">3</span>
<div style="left:265.8px;top:642.8px;width:1.8px;height:1.7px;background:#000;"></div>
<div style="left:264px;top:652px;width:5px;height:1px;background:#222;"></div>
<div style="left:265.8px;top:661.8px;width:1.8px;height:1.7px;background:#000;"></div>
<span class="t" style="font-size:9.5px;line-height:9.5px;color:#000;left:263.66px;top:667.89px;">4</span>
<div style="left:265.8px;top:680.8px;width:1.8px;height:1.7px;background:#000;"></div>
<div style="left:277px;top:381px;width:1px;height:301px;background:#CFCFCF;"></div>
<div class="clip" style="left:278px;top:399px;width:704px;height:30px;background:#183A96;"><div style="left:38px;top:0;width:1px;height:100%;background:#D2F09C;"></div><div style="left:76px;top:0;width:1px;height:100%;background:#D2F09C;"></div><div style="left:114px;top:0;width:1px;height:100%;background:#D2F09C;"></div><div style="left:152px;top:0;width:1px;height:100%;background:#D2F09C;"></div><div style="left:189px;top:0;width:1px;height:100%;background:#D2F09C;"></div><div style="left:227px;top:0;width:1px;height:100%;background:#D2F09C;"></div><div style="left:265px;top:0;width:1px;height:100%;background:#D2F09C;"></div><div style="left:303px;top:0;width:1px;height:100%;background:#D2F09C;"></div><div style="left:341px;top:0;width:1px;height:100%;background:#D2F09C;"></div><div style="left:378px;top:0;width:1px;height:100%;background:#D2F09C;"></div><div style="left:416px;top:0;width:1px;height:100%;background:#D2F09C;"></div><div style="left:454px;top:0;width:1px;height:100%;background:#D2F09C;"></div><div style="left:492px;top:0;width:1px;height:100%;background:#D2F09C;"></div><div style="left:530px;top:0;width:1px;height:100%;background:#D2F09C;"></div><div style="left:567px;top:0;width:1px;height:100%;background:#D2F09C;"></div><div style="left:605px;top:0;width:1px;height:100%;background:#D2F09C;"></div><div style="left:643px;top:0;width:1px;height:100%;background:#D2F09C;"></div><div style="left:681px;top:0;width:1px;height:100%;background:#D2F09C;"></div></div>
<div class="clip" style="left:278px;top:446px;width:704px;height:57px;background:#183A96;"><div style="left:38px;top:0;width:1px;height:100%;background:#D2F09C;"></div><div style="left:76px;top:0;width:1px;height:100%;background:#D2F09C;"></div><div style="left:114px;top:0;width:1px;height:100%;background:#D2F09C;"></div><div style="left:152px;top:0;width:1px;height:100%;background:#D2F09C;"></div><div style="left:189px;top:0;width:1px;height:100%;background:#D2F09C;"></div><div style="left:227px;top:0;width:1px;height:100%;background:#D2F09C;"></div><div style="left:265px;top:0;width:1px;height:100%;background:#D2F09C;"></div><div style="left:303px;top:0;width:1px;height:100%;background:#D2F09C;"></div><div style="left:341px;top:0;width:1px;height:100%;background:#D2F09C;"></div><div style="left:378px;top:0;width:1px;height:100%;background:#D2F09C;"></div><div style="left:416px;top:0;width:1px;height:100%;background:#D2F09C;"></div><div style="left:454px;top:0;width:1px;height:100%;background:#D2F09C;"></div><div style="left:492px;top:0;width:1px;height:100%;background:#D2F09C;"></div><div style="left:530px;top:0;width:1px;height:100%;background:#D2F09C;"></div><div style="left:567px;top:0;width:1px;height:100%;background:#D2F09C;"></div><div style="left:605px;top:0;width:1px;height:100%;background:#D2F09C;"></div><div style="left:643px;top:0;width:1px;height:100%;background:#D2F09C;"></div><div style="left:681px;top:0;width:1px;height:100%;background:#D2F09C;"></div><div style="left:0;top:38px;width:100%;height:1px;background:#D2F09C;"></div></div>
<div class="clip" style="left:278px;top:520px;width:704px;height:106px;background:#183A96;"><div style="left:38px;top:0;width:1px;height:100%;background:#D2F09C;"></div><div style="left:76px;top:0;width:1px;height:100%;background:#D2F09C;"></div><div style="left:114px;top:0;width:1px;height:100%;background:#D2F09C;"></div><div style="left:152px;top:0;width:1px;height:100%;background:#D2F09C;"></div><div style="left:189px;top:0;width:1px;height:100%;background:#D2F09C;"></div><div style="left:227px;top:0;width:1px;height:100%;background:#D2F09C;"></div><div style="left:265px;top:0;width:1px;height:100%;background:#D2F09C;"></div><div style="left:303px;top:0;width:1px;height:100%;background:#D2F09C;"></div><div style="left:341px;top:0;width:1px;height:100%;background:#D2F09C;"></div><div style="left:378px;top:0;width:1px;height:100%;background:#D2F09C;"></div><div style="left:416px;top:0;width:1px;height:100%;background:#D2F09C;"></div><div style="left:454px;top:0;width:1px;height:100%;background:#D2F09C;"></div><div style="left:492px;top:0;width:1px;height:100%;background:#D2F09C;"></div><div style="left:530px;top:0;width:1px;height:100%;background:#D2F09C;"></div><div style="left:567px;top:0;width:1px;height:100%;background:#D2F09C;"></div><div style="left:605px;top:0;width:1px;height:100%;background:#D2F09C;"></div><div style="left:643px;top:0;width:1px;height:100%;background:#D2F09C;"></div><div style="left:681px;top:0;width:1px;height:100%;background:#D2F09C;"></div><div style="left:0;top:38px;width:100%;height:1px;background:#D2F09C;"></div><div style="left:0;top:76px;width:100%;height:1px;background:#D2F09C;"></div></div>
<div style="left:278px;top:381px;width:704px;height:19px;background:#fff;border:0;border-top:1px solid #C6C6C6;border-left:1px solid #C6C6C6;border-bottom:1px solid #111;"></div>
<svg style="left:283.5px;top:385.9px" width="10" height="10"><use href="#sel"/></svg>
<span class="t" style="font-size:12px;line-height:12px;color:#444;letter-spacing:-0.210px;left:297.00px;top:385.09px;">Encabezado del formulario</span>
<div style="left:278px;top:429px;width:704px;height:18px;background:#fff;border:0;border-top:1px solid #C6C6C6;border-left:1px solid #C6C6C6;border-bottom:1px solid #111;"></div>
<svg style="left:283.5px;top:432.9px" width="10" height="10"><use href="#sel"/></svg>
<span class="t" style="font-size:12px;line-height:12px;color:#444;letter-spacing:-0.265px;left:297.00px;top:432.09px;">Detalle</span>
<div style="left:278px;top:503px;width:704px;height:18px;background:#fff;border:0;border-top:1px solid #C6C6C6;border-left:1px solid #C6C6C6;border-bottom:1px solid #111;"></div>
<svg style="left:283.5px;top:506.9px" width="10" height="10"><use href="#sel"/></svg>
<span class="t" style="font-size:12px;line-height:12px;color:#444;letter-spacing:-0.188px;left:297.00px;top:506.09px;">Pie del formulario</span>
<div style="left:278px;top:626px;width:704px;height:1px;background:#111;"></div>
<div style="left:278px;top:627px;width:704px;height:55px;background:#E4E4E4;"></div>
<div class="clip" style="left:278px;top:399px;width:704px;height:283px;">
<div style="left:46px;top:4px;width:185.3px;height:22px;border:1px solid #7485BE;"></div>
<span class="t" style="font-size:13.3px;line-height:13.3px;color:#fff;font-weight:bold;transform-origin:0 0;transform:scaleX(1.0489);left:112.70px;top:5.99px;">Artículo</span>
<div style="left:238px;top:4px;width:65.3px;height:22px;border:1px solid #7485BE;"></div>
<span class="t" style="font-size:13.3px;line-height:13.3px;color:#fff;font-weight:bold;transform-origin:0 0;transform:scaleX(1.0810);left:240.00px;top:5.99px;">Cantidad</span>
<div style="left:310px;top:4px;width:76.5px;height:22px;border:1px solid #7485BE;"></div>
<span class="t" style="font-size:13.3px;line-height:13.3px;color:#fff;font-weight:bold;transform-origin:0 0;transform:scaleX(1.0589);left:312.00px;top:5.99px;">Descuento</span>
<div style="left:393.5px;top:4px;width:141.1px;height:22px;border:1px solid #7485BE;"></div>
<span class="t" style="font-size:13.3px;line-height:13.3px;color:#fff;font-weight:bold;transform-origin:0 0;transform:scaleX(1.0071);left:450.50px;top:5.79px;">PVP</span>
<div style="left:540.3px;top:4px;width:65.7px;height:22px;border:1px solid #7485BE;"></div>
<span class="t" style="font-size:13.3px;line-height:13.3px;color:#fff;font-weight:bold;transform-origin:0 0;transform:scaleX(1.0662);left:547.80px;top:5.79px;">Importe</span>
<div style="left:612.4px;top:4px;width:69.4px;height:22px;border:1px solid #7485BE;"></div>
<span class="t" style="font-size:13.3px;line-height:13.3px;color:#fff;font-weight:bold;transform-origin:0 0;transform:scaleX(1.0458);left:617.80px;top:5.79px;">Depósito</span>
<div style="left:688.4px;top:4px;width:73.6px;height:22px;border:1px solid #7485BE;"></div>
<div style="left:4px;top:52px;width:37px;height:36px;border:1px solid #A9C27A;"></div>
<div class="clip" style="left:4px;top:51px;width:20.5px;height:20.5px;background:#fff;border:3px solid #B71218;">
<span class="t" style="font-size:13.3px;line-height:13.3px;color:#404040;transform-origin:0 0;transform:scaleX(1.1506);left:0.50px;top:-0.41px;">Im</span>
</div>
<div class="clip" style="left:46px;top:51.5px;width:185px;height:20.5px;background:#fff;">
<span class="t" style="font-size:13.3px;line-height:13.3px;color:#404040;transform-origin:0 0;transform:scaleX(1.1291);left:2.40px;top:1.99px;">Independiente</span>
</div>
<div style="left:0px;top:0px;width:0;height:0">
</div>
<div style="left:214.6px;top:52px;width:16.4px;height:20px;background:#fff;border:1px solid #8E8E8E;"></div>
<svg style="left:214.6px;top:52px" width="16.4" height="20" viewBox="0 0 16 20"><path d="M4.3 8 L8 12.2 L11.7 8" fill="none" stroke="#333" stroke-width="1.7"/></svg>
<div class="clip" style="left:238px;top:51px;width:65.3px;height:21.5px;background:#fff;">
<span class="t" style="font-size:13.3px;line-height:13.3px;color:#404040;transform-origin:0 0;transform:scaleX(1.1345);left:2.00px;top:2.49px;">Cantidad</span>
</div>
<div class="clip" style="left:310px;top:51px;width:76.5px;height:21.5px;background:#fff;">
<span class="t" style="font-size:13.3px;line-height:13.3px;color:#404040;transform-origin:0 0;transform:scaleX(0.9993);left:22.50px;top:2.49px;">%Dto</span>
</div>
<div class="clip" style="left:393.5px;top:51.6px;width:68px;height:21px;background:#ECECEC;">
<span class="t" style="font-size:13.3px;line-height:13.3px;color:#7A7A7A;transform-origin:0 0;transform:scaleX(0.9808);left:21.00px;top:1.89px;">PVP</span>
</div>
<div class="clip" style="left:466px;top:51.6px;width:69px;height:21px;background:#fff;">
<span class="t" style="font-size:13.3px;line-height:13.3px;color:#404040;transform-origin:0 0;transform:scaleX(1.1313);left:2.20px;top:1.89px;">PModificado</span>
</div>
<div class="clip" style="left:540.3px;top:51.6px;width:67px;height:21px;background:#ECECEC;">
<span class="t" style="font-size:13.3px;line-height:13.3px;color:#6E6E6E;font-weight:bold;transform-origin:0 0;transform:scaleX(1.0785);left:6.90px;top:1.89px;">Importe</span>
</div>
<div class="clip" style="left:612.4px;top:51.6px;width:69.4px;height:21px;background:#ECECEC;">
<span class="t" style="font-size:13.3px;line-height:13.3px;color:#7A7A7A;transform-origin:0 0;transform:scaleX(1.1164);left:5.40px;top:1.89px;">Deposito</span>
</div>
<div class="clip" style="left:688.4px;top:51.6px;width:40px;height:21px;background:#C8C8C8;">
<span class="t" style="font-size:13.3px;line-height:13.3px;color:#1D1DDC;text-decoration:underline;transform-origin:0 0;transform:scaleX(0.8954);left:2.40px;top:1.89px;">UR</span>
</div>
<div class="clip" style="left:46px;top:77.5px;width:185px;height:21px;background:#BFBFBF;">
<span class="t" style="font-size:13.3px;line-height:13.3px;color:#404040;transform-origin:0 0;transform:scaleX(1.0935);left:2.90px;top:2.99px;">=DBúsq("Articulo";"T072Articulos"</span>
</div>
<div class="clip" style="left:238px;top:77.5px;width:148.5px;height:21px;background:#BFBFBF;">
<span class="t" style="font-size:13.3px;line-height:13.3px;color:#404040;transform-origin:0 0;transform:scaleX(1.1388);left:25.50px;top:2.99px;">CodigoArticulo</span>
</div>
<div class="clip" style="left:393.5px;top:77.7px;width:214.4px;height:20.6px;background:#BFBFBF;">
<span class="t" style="font-size:13.3px;line-height:13.3px;color:#404040;transform-origin:0 0;transform:scaleX(1.0865);left:0.50px;top:2.79px;">ı=" &amp; Nz(DBúsq("CodigoCategoria</span>
</div>
<div style="left:612.4px;top:77.7px;width:150px;height:20.6px;background:#183A96;border:1px solid #9AA7CF;"></div>
<div style="left:8px;top:125px;width:114px;height:21px;border:1px solid #7485BE;"></div>
<span class="t" style="font-size:13.3px;line-height:13.3px;color:#fff;font-weight:bold;transform-origin:0 0;transform:scaleX(1.0336);left:19.30px;top:126.69px;">Base imponible</span>
<div class="clip" style="left:129px;top:124.5px;width:95.2px;height:21.5px;background:#BFBFBF;">
<span class="t" style="font-size:13.3px;line-height:13.3px;color:#404040;transform-origin:0 0;transform:scaleX(1.0691);left:1.50px;top:3.59px;">ecioSinIVA])-S</span>
</div>
<div style="left:238px;top:125px;width:34.5px;height:21px;border:1px solid #7485BE;"></div>
<span class="t" style="font-size:13.3px;line-height:13.3px;color:#fff;font-weight:bold;transform-origin:0 0;transform:scaleX(1.0386);left:249.70px;top:126.69px;">IVA</span>
<div class="clip" style="left:280px;top:124.5px;width:95.4px;height:21.5px;background:#BFBFBF;">
<span class="t" style="font-size:13.3px;line-height:13.3px;color:#404040;transform-origin:0 0;transform:scaleX(1.1330);left:-5.50px;top:3.59px;">Suma([IVATota</span>
</div>
<div style="left:8px;top:168px;width:73px;height:41.5px;border:1px solid #7485BE;"></div>
<span class="t" style="font-size:23px;line-height:23px;color:#fff;font-weight:bold;transform-origin:0 0;transform:scaleX(1.1552);left:17.80px;top:170.28px;">Total</span>
<div class="clip" style="left:91px;top:168px;width:139.7px;height:41.5px;background:#fff;border:1px solid #C9C9C9;">
<span class="t" style="font-size:23px;line-height:23px;color:#404040;font-weight:bold;transform-origin:0 0;transform:scaleX(1.0760);left:1.50px;top:2.68px;">ar(Suma([In</span>
</div>
<div style="left:265.8px;top:168px;width:125.2px;height:41.5px;border:1px solid #7485BE;"></div>
<span class="t" style="font-size:23px;line-height:23px;color:#fff;font-weight:bold;transform-origin:0 0;transform:scaleX(1.0997);left:280.50px;top:170.28px;">Depósito</span>
<div class="clip" style="left:401.6px;top:167.5px;width:139px;height:42px;background:#fff;border:1px solid #C9C9C9;">
<span class="t" style="font-size:23px;line-height:23px;color:#404040;font-weight:bold;transform-origin:0 0;transform:scaleX(1.0552);left:-7.10px;top:3.18px;">ar(Suma([De</span>
</div>
<div style="left:567.6px;top:168px;width:194.4px;height:41.5px;border:1px solid #7485BE;"></div>
<span class="t" style="font-size:23px;line-height:23px;color:#fff;font-weight:bold;transform-origin:0 0;transform:scaleX(1.1208);left:583.30px;top:170.28px;">Pendiente</span>
</div>
<div style="left:983px;top:91px;width:16px;height:592px;background:#F0F0F0;"></div>
<div style="left:983px;top:90.5px;width:15px;height:14.5px;background:#fff;border:1px solid #ABABAB;"></div>
<svg style="left:983px;top:90px" width="15" height="16"><path d="M4 10 L7.5 6 L11 10z" fill="#606060"/></svg>
<div style="left:983px;top:105px;width:15px;height:267px;background:#fff;border:1px solid #ABABAB;"></div>
<div style="left:983px;top:666.5px;width:15px;height:14.5px;background:#fff;border:1px solid #ABABAB;"></div>
<svg style="left:983px;top:666.5px" width="15" height="14.5"><path d="M4 5.5 L7.5 9.5 L11 5.5z" fill="#606060"/></svg>
<div style="left:215px;top:683px;width:768px;height:17px;background:#F0F0F0;"></div>
<div style="left:216px;top:684px;width:15px;height:15px;background:#fff;border:1px solid #ABABAB;"></div>
<svg style="left:216px;top:684px" width="15" height="15"><path d="M9.5 4 L5.5 7.5 L9.5 11z" fill="#606060"/></svg>
<div style="left:231px;top:684px;width:260px;height:15px;background:#fff;border:1px solid #ABABAB;"></div>
<div style="left:965px;top:684px;width:15px;height:15px;background:#fff;border:1px solid #ABABAB;"></div>
<svg style="left:965px;top:684px" width="15" height="15"><path d="M5.5 4 L9.5 7.5 L5.5 11z" fill="#606060"/></svg>
<div style="left:982px;top:683px;width:17px;height:17px;background:#BFBFBF;"></div>
<div style="left:999px;top:64px;width:1px;height:636px;background:#DADADA;"></div>
<div style="left:1000px;top:64px;width:366px;height:636px;background:#fff;"></div>
<span class="t" style="font-size:21.8px;line-height:21.8px;color:#AA474B;letter-spacing:-0.547px;left:1013.70px;top:79.70px;">Hoja de propiedades</span>
<svg style="left:1342px;top:81px" width="12" height="12" viewBox="0 0 12 12"><path d="M1.6 1.6 L10.4 10.4 M10.4 1.6 L1.6 10.4" stroke="#3a3a3a" stroke-width="1.7"/></svg>
<span class="t" style="font-size:12px;line-height:12px;color:#444;letter-spacing:-0.276px;left:1010.40px;top:105.69px;">Tipo de selección:</span>
<span class="t" style="font-size:12px;line-height:12px;color:#444;letter-spacing:-0.205px;left:1109.30px;top:105.69px;">Formulario</span>
<div style="left:1009px;top:125.5px;width:249.5px;height:22px;background:#fff;border:1px solid #ABABAB;"></div>
<span class="t" style="font-size:12px;line-height:12px;color:#111;letter-spacing:-0.275px;left:1013.70px;top:128.99px;">Formulario</span>
<div style="left:1240.5px;top:128px;width:16px;height:17.5px;background:#fff;border:1px solid #8E8E8E;"></div>
<svg style="left:1240.5px;top:128px" width="16" height="17.5" viewBox="0 0 16 17.5"><path d="M4.4 7 L8 11 L11.6 7" fill="none" stroke="#333" stroke-width="1.6"/></svg>
<div style="left:1060.5px;top:154px;width:48.5px;height:18.5px;background:#E9E9E9;border:1px solid #B4B4B4;border-bottom:0;box-shadow:inset -1px 0 0 #cfcfcf;"></div>
<span class="t" style="font-size:12px;line-height:12px;color:#111;letter-spacing:-0.309px;left:1069.20px;top:158.19px;">Datos</span>
<div style="left:1109px;top:154px;width:50px;height:18.5px;background:#E9E9E9;border:1px solid #B4B4B4;border-bottom:0;box-shadow:inset -1px 0 0 #cfcfcf;"></div>
<span class="t" style="font-size:12px;line-height:12px;color:#111;letter-spacing:-0.580px;left:1114.30px;top:158.19px;">Eventos</span>
<div style="left:1159.5px;top:154px;width:49.5px;height:18.5px;background:#E9E9E9;border:1px solid #B4B4B4;border-bottom:0;box-shadow:inset -1px 0 0 #cfcfcf;"></div>
<span class="t" style="font-size:12px;line-height:12px;color:#111;letter-spacing:-0.448px;left:1170.30px;top:158.19px;">Otras</span>
<div style="left:1209px;top:154px;width:49.5px;height:18.5px;background:#E9E9E9;border:1px solid #B4B4B4;border-bottom:0;box-shadow:inset -1px 0 0 #cfcfcf;"></div>
<span class="t" style="font-size:12px;line-height:12px;color:#111;letter-spacing:-0.384px;left:1218.70px;top:158.19px;">Todas</span>
<div style="left:1007.5px;top:172px;width:350.5px;height:520.5px;background:#fff;border:1px solid #ABABAB;"></div>
<div style="left:1007.5px;top:152.5px;width:53.5px;height:21px;background:#fff;border:1px solid #ABABAB;border-bottom:0;"></div>
<span class="t" style="font-size:12px;line-height:12px;color:#111;letter-spacing:-0.325px;left:1012.30px;top:156.19px;">Formato</span>
<div style="left:1011px;top:178px;width:326.5px;height:511px;background:#fff;border:1px solid #C8C8C8;"></div>
<div style="left:1011px;top:193px;width:326px;height:1px;background:#C8C8C8;"></div>
<div style="left:1011px;top:208px;width:326px;height:1px;background:#C8C8C8;"></div>
<div style="left:1011px;top:223px;width:326px;height:1px;background:#C8C8C8;"></div>
<div style="left:1011px;top:238px;width:326px;height:1px;background:#C8C8C8;"></div>
<div style="left:1011px;top:253px;width:326px;height:1px;background:#C8C8C8;"></div>
<div style="left:1011px;top:268px;width:326px;height:1px;background:#C8C8C8;"></div>
<div style="left:1011px;top:283px;width:326px;height:1px;background:#C8C8C8;"></div>
<div style="left:1011px;top:298px;width:326px;height:1px;background:#C8C8C8;"></div>
<div style="left:1011px;top:313px;width:326px;height:1px;background:#C8C8C8;"></div>
<div style="left:1011px;top:328px;width:326px;height:1px;background:#C8C8C8;"></div>
<div style="left:1011px;top:343px;width:326px;height:1px;background:#C8C8C8;"></div>
<div style="left:1011px;top:358px;width:326px;height:1px;background:#C8C8C8;"></div>
<div style="left:1011px;top:373px;width:326px;height:1px;background:#C8C8C8;"></div>
<div style="left:1011px;top:388px;width:326px;height:1px;background:#C8C8C8;"></div>
<div style="left:1011px;top:403px;width:326px;height:1px;background:#C8C8C8;"></div>
<div style="left:1011px;top:418px;width:326px;height:1px;background:#C8C8C8;"></div>
<div style="left:1011px;top:433px;width:326px;height:1px;background:#C8C8C8;"></div>
<div style="left:1011px;top:448px;width:326px;height:1px;background:#C8C8C8;"></div>
<div style="left:1011px;top:463px;width:326px;height:1px;background:#C8C8C8;"></div>
<div style="left:1011px;top:478px;width:326px;height:1px;background:#C8C8C8;"></div>
<div style="left:1011px;top:493px;width:326px;height:1px;background:#C8C8C8;"></div>
<div style="left:1011px;top:508px;width:326px;height:1px;background:#C8C8C8;"></div>
<div style="left:1011px;top:523px;width:326px;height:1px;background:#C8C8C8;"></div>
<div style="left:1011px;top:538px;width:326px;height:1px;background:#C8C8C8;"></div>
<div style="left:1011px;top:553px;width:326px;height:1px;background:#C8C8C8;"></div>
<div style="left:1011px;top:568px;width:326px;height:1px;background:#C8C8C8;"></div>
<div style="left:1011px;top:583px;width:326px;height:1px;background:#C8C8C8;"></div>
<div style="left:1011px;top:598px;width:326px;height:1px;background:#C8C8C8;"></div>
<div style="left:1011px;top:613px;width:326px;height:1px;background:#C8C8C8;"></div>
<div style="left:1011px;top:628px;width:326px;height:1px;background:#C8C8C8;"></div>
<div style="left:1011px;top:643px;width:326px;height:1px;background:#C8C8C8;"></div>
<div style="left:1011px;top:658px;width:326px;height:1px;background:#C8C8C8;"></div>
<div style="left:1011px;top:673px;width:326px;height:1px;background:#C8C8C8;"></div>
<div style="left:1163px;top:178px;width:1px;height:510px;background:#C8C8C8;"></div>
<div class="clip" style="left:1012px;top:178px;width:151px;height:510px;">
<span class="t" style="font-size:12px;line-height:12px;color:#111;left:1.40px;top:3.19px;letter-spacing:-0.17px;">Título</span>
<span class="t" style="font-size:12px;line-height:12px;color:#111;left:1.40px;top:18.19px;letter-spacing:-0.17px;">Vista predeterminada</span>
<span class="t" style="font-size:12px;line-height:12px;color:#111;left:1.40px;top:33.19px;letter-spacing:-0.17px;">Permitir vista Formulario</span>
<span class="t" style="font-size:12px;line-height:12px;color:#111;left:1.40px;top:48.19px;letter-spacing:-0.17px;">Permitir vista Hoja de datos</span>
<span class="t" style="font-size:12px;line-height:12px;color:#111;left:1.40px;top:63.19px;letter-spacing:-0.17px;">Permitir vista Presentación</span>
<span class="t" style="font-size:12px;line-height:12px;color:#111;left:1.40px;top:78.19px;letter-spacing:-0.17px;">Tipo de imagen</span>
<span class="t" style="font-size:12px;line-height:12px;color:#111;left:1.40px;top:93.19px;letter-spacing:-0.17px;">Imagen</span>
<span class="t" style="font-size:12px;line-height:12px;color:#111;left:1.40px;top:108.19px;letter-spacing:-0.17px;">Mosaico de imágenes</span>
<span class="t" style="font-size:12px;line-height:12px;color:#111;left:1.40px;top:123.19px;letter-spacing:-0.17px;">Distribución de la imagen</span>
<span class="t" style="font-size:12px;line-height:12px;color:#111;left:1.40px;top:138.19px;letter-spacing:-0.17px;">Modo de tamaño de la imagen</span>
<span class="t" style="font-size:12px;line-height:12px;color:#111;left:1.40px;top:153.19px;letter-spacing:-0.17px;">Ancho</span>
<span class="t" style="font-size:12px;line-height:12px;color:#111;left:1.40px;top:168.19px;letter-spacing:-0.17px;">Centrado automático</span>
<span class="t" style="font-size:12px;line-height:12px;color:#111;left:1.40px;top:183.19px;letter-spacing:-0.17px;">Ajuste de tamaño automático</span>
<span class="t" style="font-size:12px;line-height:12px;color:#111;left:1.40px;top:198.19px;letter-spacing:-0.17px;">Ajustar a la pantalla</span>
<span class="t" style="font-size:12px;line-height:12px;color:#111;left:1.40px;top:213.19px;letter-spacing:-0.17px;">Estilo de los bordes</span>
<span class="t" style="font-size:12px;line-height:12px;color:#111;left:1.40px;top:228.19px;letter-spacing:-0.17px;">Selectores de registro</span>
<span class="t" style="font-size:12px;line-height:12px;color:#111;left:1.40px;top:243.19px;letter-spacing:-0.17px;">Botones de navegación</span>
<span class="t" style="font-size:12px;line-height:12px;color:#111;left:1.40px;top:258.19px;letter-spacing:-0.17px;">Título de navegación</span>
<span class="t" style="font-size:12px;line-height:12px;color:#111;left:1.40px;top:273.19px;letter-spacing:-0.17px;">Separadores de registros</span>
<span class="t" style="font-size:12px;line-height:12px;color:#111;left:1.40px;top:288.19px;letter-spacing:-0.17px;">Barras de desplazamiento</span>
<span class="t" style="font-size:12px;line-height:12px;color:#111;left:1.40px;top:303.19px;letter-spacing:-0.17px;">Cuadro de control</span>
<span class="t" style="font-size:12px;line-height:12px;color:#111;left:1.40px;top:318.19px;letter-spacing:-0.17px;">Botón Cerrar</span>
<span class="t" style="font-size:12px;line-height:12px;color:#111;left:1.40px;top:333.19px;letter-spacing:-0.17px;">Botones Minimizar Maximizar</span>
<span class="t" style="font-size:12px;line-height:12px;color:#111;left:1.40px;top:348.19px;letter-spacing:-0.17px;">Movible</span>
<span class="t" style="font-size:12px;line-height:12px;color:#111;left:1.40px;top:363.19px;letter-spacing:-0.17px;">Tamaño del formulario dividido</span>
<span class="t" style="font-size:12px;line-height:12px;color:#111;left:1.40px;top:378.19px;letter-spacing:-0.17px;">Orientación del formulario dividido</span>
<span class="t" style="font-size:12px;line-height:12px;color:#111;left:1.40px;top:393.19px;letter-spacing:-0.17px;">Barra divisora del formulario dividido</span>
<span class="t" style="font-size:12px;line-height:12px;color:#111;left:1.40px;top:408.19px;letter-spacing:-0.17px;">Hoja de datos del formulario dividido</span>
<span class="t" style="font-size:12px;line-height:12px;color:#111;left:1.40px;top:423.19px;letter-spacing:-0.17px;">Impresión del formulario dividido</span>
<span class="t" style="font-size:12px;line-height:12px;color:#111;left:1.40px;top:438.19px;letter-spacing:-0.17px;">Guardar posición de la barra divisora</span>
<span class="t" style="font-size:12px;line-height:12px;color:#111;left:1.40px;top:453.19px;letter-spacing:-0.17px;">Hoja secundaria de datos expandida</span>
<span class="t" style="font-size:12px;line-height:12px;color:#111;left:1.40px;top:468.19px;letter-spacing:-0.17px;">Alto de hoja secundaria de datos</span>
<span class="t" style="font-size:12px;line-height:12px;color:#111;left:1.40px;top:483.19px;letter-spacing:-0.17px;">Línea X</span>
<span class="t" style="font-size:12px;line-height:12px;color:#111;left:1.40px;top:498.19px;letter-spacing:-0.17px;">Línea Y</span>
</div>
<div class="clip" style="left:1164px;top:178px;width:173px;height:510px;">
<span class="t" style="font-size:12px;line-height:12px;color:#111;letter-spacing:-0.135px;left:2.20px;top:3.19px;">Subformulario T00Configuracion</span>
<span class="t" style="font-size:12px;line-height:12px;color:#111;left:2.20px;top:18.19px;letter-spacing:0.02px;">Formularios continuos</span>
<span class="t" style="font-size:12px;line-height:12px;color:#111;left:2.20px;top:33.19px;letter-spacing:0.02px;">Sí</span>
<span class="t" style="font-size:12px;line-height:12px;color:#111;left:2.20px;top:48.19px;letter-spacing:0.02px;">Sí</span>
<span class="t" style="font-size:12px;line-height:12px;color:#111;left:2.20px;top:63.19px;letter-spacing:0.02px;">Sí</span>
<span class="t" style="font-size:12px;line-height:12px;color:#111;left:2.20px;top:78.19px;letter-spacing:0.02px;">Insertado</span>
<span class="t" style="font-size:12px;line-height:12px;color:#111;left:2.20px;top:93.19px;letter-spacing:0.02px;">(ninguna)</span>
<span class="t" style="font-size:12px;line-height:12px;color:#111;left:2.20px;top:108.19px;letter-spacing:0.02px;">No</span>
<span class="t" style="font-size:12px;line-height:12px;color:#111;left:2.20px;top:123.19px;letter-spacing:0.02px;">Centro</span>
<span class="t" style="font-size:12px;line-height:12px;color:#111;left:2.20px;top:138.19px;letter-spacing:0.02px;">Recortar</span>
<span class="t" style="font-size:12px;line-height:12px;color:#111;left:2.20px;top:153.19px;letter-spacing:0.02px;">22,667cm</span>
<span class="t" style="font-size:12px;line-height:12px;color:#111;left:2.20px;top:168.19px;letter-spacing:0.02px;">Sí</span>
<span class="t" style="font-size:12px;line-height:12px;color:#111;left:2.20px;top:183.19px;letter-spacing:0.02px;">Sí</span>
<span class="t" style="font-size:12px;line-height:12px;color:#111;left:2.20px;top:198.19px;letter-spacing:0.02px;">Sí</span>
<span class="t" style="font-size:12px;line-height:12px;color:#111;left:2.20px;top:213.19px;letter-spacing:0.02px;">Ajustable</span>
<span class="t" style="font-size:12px;line-height:12px;color:#111;left:2.20px;top:228.19px;letter-spacing:0.02px;">Sí</span>
<span class="t" style="font-size:12px;line-height:12px;color:#111;left:2.20px;top:243.19px;letter-spacing:0.02px;">Sí</span>
<span class="t" style="font-size:12px;line-height:12px;color:#111;left:2.20px;top:273.19px;letter-spacing:0.02px;">No</span>
<span class="t" style="font-size:12px;line-height:12px;color:#111;left:2.20px;top:288.19px;letter-spacing:0.02px;">Ambas</span>
<span class="t" style="font-size:12px;line-height:12px;color:#111;left:2.20px;top:303.19px;letter-spacing:0.02px;">Sí</span>
<span class="t" style="font-size:12px;line-height:12px;color:#111;left:2.20px;top:318.19px;letter-spacing:0.02px;">Sí</span>
<span class="t" style="font-size:12px;line-height:12px;color:#111;left:2.20px;top:333.19px;letter-spacing:0.02px;">Ambos habilitados</span>
<span class="t" style="font-size:12px;line-height:12px;color:#111;left:2.20px;top:348.19px;letter-spacing:0.02px;">No</span>
<span class="t" style="font-size:12px;line-height:12px;color:#111;left:2.20px;top:363.19px;letter-spacing:0.02px;">Auto</span>
<span class="t" style="font-size:12px;line-height:12px;color:#111;left:2.20px;top:378.19px;letter-spacing:0.02px;">Hoja de datos arriba</span>
<span class="t" style="font-size:12px;line-height:12px;color:#111;left:2.20px;top:393.19px;letter-spacing:0.02px;">Sí</span>
<span class="t" style="font-size:12px;line-height:12px;color:#111;left:2.20px;top:408.19px;letter-spacing:0.02px;">Permitir ediciones</span>
<span class="t" style="font-size:12px;line-height:12px;color:#111;left:2.20px;top:423.19px;letter-spacing:0.02px;">solo formulario</span>
<span class="t" style="font-size:12px;line-height:12px;color:#111;left:2.20px;top:438.19px;letter-spacing:0.02px;">Sí</span>
<span class="t" style="font-size:12px;line-height:12px;color:#111;left:2.20px;top:453.19px;letter-spacing:0.02px;">No</span>
<span class="t" style="font-size:12px;line-height:12px;color:#111;left:2.20px;top:468.19px;letter-spacing:0.02px;">0cm</span>
<span class="t" style="font-size:12px;line-height:12px;color:#111;left:2.20px;top:483.19px;letter-spacing:0.02px;">10</span>
<span class="t" style="font-size:12px;line-height:12px;color:#111;left:2.20px;top:498.19px;letter-spacing:0.02px;">10</span>
</div>
<div style="left:1319px;top:195px;width:16.5px;height:13px;background:#fff;border:1px solid #8E8E8E;"></div>
<svg style="left:1319px;top:195px" width="16.5" height="12" viewBox="0 0 16.5 12"><path d="M4.6 7.6 L8.2 11.6 L11.8 7.6" fill="none" stroke="#333" stroke-width="1.5"/></svg>
<div style="left:1337.5px;top:178px;width:16px;height:511px;background:#fff;border:1px solid #DADADA;"></div>
<svg style="left:1338px;top:180px" width="15" height="14" viewBox="0 0 15 14"><path d="M3.8 9 L7.5 5 L11.2 9" fill="none" stroke="#444" stroke-width="1.1"/></svg>
<div style="left:1338.5px;top:196px;width:14.5px;height:16px;background:#D9D9D9;"></div>
<svg style="left:1338px;top:674px" width="15" height="14" viewBox="0 0 15 14"><path d="M3.8 5 L7.5 9 L11.2 5" fill="none" stroke="#444" stroke-width="1.1"/></svg>
<div style="left:0px;top:700px;width:1366px;height:22px;background:#F0F0F0;border:0;border-top:1px solid #D4D4D4;"></div>
<span class="t" style="font-size:12px;line-height:12px;color:#444;letter-spacing:-0.261px;left:8.00px;top:705.19px;">Vista en la que se muestra el objeto al abrirse</span>
<div style="left:1329px;top:701px;width:37px;height:21px;background:#CFCFCF;"></div>
<svg style="left:1258px;top:702px" width="108" height="20" viewBox="0 0 108 20">
<g fill="none" stroke="#555" stroke-width="1.1"><g transform="translate(2.5,0)"><rect x="2.5" y="3.5" width="13" height="11"/><path d="M2.5 6.5 h13" stroke-width="2"/><path d="M4.5 9.5 h4 M4.5 12 h4 M10.5 9.5 h3.5 M10.5 12 h3.5"/></g>
<g transform="translate(3.5,0)"><rect x="42.500" y="3.500" width="9" height="11.500"/><path d="M40 6.500 h14 M40 12.500 h14 M45 9.500 h6"/></g>
<g transform="translate(9.5,0)"><path d="M72 15.500 h18 M72 12.500 h18 v3 M72 12.500 v3 M75 12.500 v1.500 M78 12.500 v1.500 M81 12.500 v1.500 M84 12.500 v1.500 M87 12.500 v1.500 M73 10.500 L73 3.500 L78.500 10.500 Z M80 10 L88.500 2.500"/></g></g></svg>
<div style="left:0px;top:722px;width:1366px;height:46px;background:#1B1C1F;"></div>
<svg style="left:16px;top:736px" width="17" height="18" viewBox="0 0 17 18"><path d="M0 2.6 L7.2 1.5 V8.5 H0z M8.2 1.35 L17 0 V8.5 H8.2z M0 9.5 H7.2 V16.5 L0 15.4z M8.2 9.5 H17 V18 L8.2 16.65z" fill="#fff"/></svg>
<svg style="left:62px;top:735px" width="22" height="22" viewBox="0 0 22 22"><circle cx="13" cy="8" r="5.2" fill="none" stroke="#fff" stroke-width="1.5"/><path d="M9.4 11.8 L2.5 19" stroke="#fff" stroke-width="1.6"/></svg>
<svg style="left:100px;top:729px" width="32" height="31" viewBox="0 0 32 31"><defs><linearGradient id="gm" x1="0" y1="0" x2="1" y2="1"><stop offset="0" stop-color="#3aa0e8"/><stop offset="1" stop-color="#8fd0fb"/></linearGradient></defs>
<path d="M9 2 L29 7 V22.5 L9 17.5z" fill="url(#gm)" stroke="#1877c9" stroke-width="0.8"/><path d="M17 20 l4 1 v3.2 l-4-1z" fill="#9aa6b3"/><path d="M1.5 22.5 L11 19 L25 24.5 L14 29z" fill="#e4e8ec"/><path d="M14 23 L18 21.6 L26 24.8 L21.5 26.6z" fill="#c3cad2"/></svg>
<svg style="left:142px;top:732px" width="20" height="28" viewBox="0 0 20 28"><path d="M1 3 L8 1.2 L9.5 3 H18.5 V21.5 H9 L9 26.5 L1 24z" fill="#F7D56E"/><path d="M9 3 H18.5 V21.5 H9z" fill="#FBE596"/><path d="M1 3 L9 5 V26.5 L1 24z" fill="#EFC24F"/></svg>
<svg style="left:177px;top:728.7px" width="32" height="32" viewBox="-16 -16 32 32">
<circle r="15" fill="#DB4437"/>
<path d="M0 0 L-12.99 -7.5 A15 15 0 0 0 7.5 12.99 Z" fill="#0F9D58"/>
<path d="M0 0 L7.5 12.99 A15 15 0 0 0 12.99 -7.5 L0 -7.5 Z" fill="#FFCD40"/>
<path d="M-12.99 -7.5 A15 15 0 0 1 12.99 -7.5 L0 -7.5 Z" fill="#DB4437"/>
<circle r="7" fill="#fff"/><circle r="5.5" fill="#4285F4"/></svg>
<svg style="left:245px;top:730px" width="24" height="22" viewBox="0 0 24 22"><rect x="10" y="2.5" width="13" height="17" fill="#fff"/><g stroke="#2B579A" stroke-width="1.1"><path d="M13 6 h8 M13 8.5 h8 M13 11 h8 M13 13.5 h8 M13 16 h8"/></g><path d="M0 2.5 L14 0 V22 L0 19.5z" fill="#2B579A"/><text x="2.2" y="15.2" font-family="Liberation Sans" font-weight="bold" font-size="10" fill="#fff">W</text></svg>
<span class="t" style="font-size:12px;line-height:12px;color:#fff;letter-spacing:-0.064px;left:273.30px;top:736.69px;">Nuevo Docu...</span>
<div style="left:241px;top:760px;width:111px;height:2px;background:#8A9BAB;"></div>
<svg style="left:365px;top:730px" width="24" height="22" viewBox="0 0 24 22"><rect x="10" y="2.5" width="13" height="17" fill="#fff"/><g stroke="#217346" stroke-width="1"><path d="M13 6 h8 M13 9 h8 M13 12 h8 M13 15 h8 M17 4 v14"/></g><path d="M0 2.5 L14 0 V22 L0 19.5z" fill="#217346"/><text x="3.4" y="15.2" font-family="Liberation Sans" font-weight="bold" font-size="10.5" fill="#fff">X</text></svg>
<span class="t" style="font-size:12px;line-height:12px;color:#fff;letter-spacing:-0.038px;left:393.00px;top:736.69px;">Nuevo Hoja ...</span>
<div style="left:361px;top:760px;width:111px;height:2px;background:#8A9BAB;"></div>
<svg style="left:485px;top:730px" width="24" height="22" viewBox="0 0 24 22"><g fill="#fff"><ellipse cx="17" cy="5" rx="5.5" ry="2.3"/><rect x="11.5" y="5" width="11" height="12"/><ellipse cx="17" cy="17" rx="5.5" ry="2.3"/></g><g stroke="#A4373A" stroke-width="0.9" fill="none"><path d="M11.5 9 a5.5 2.3 0 0 0 11 0 M11.5 13 a5.5 2.3 0 0 0 11 0"/></g><path d="M0 2.5 L14 0 V22 L0 19.5z" fill="#A4373A"/><text x="3.2" y="15.2" font-family="Liberation Sans" font-weight="bold" font-size="10.5" fill="#fff">A</text></svg>
<span class="t" style="font-size:12px;line-height:12px;color:#fff;letter-spacing:-0.363px;left:513.00px;top:736.69px;">Access</span>
<div style="left:481px;top:760px;width:111px;height:2px;background:#8A9BAB;"></div>
<svg style="left:604px;top:728px" width="26" height="26" viewBox="0 0 26 26"><rect x="6" y="6" width="18" height="18" fill="#fff"/><rect x="6" y="6" width="18" height="3" fill="#39a8e0"/><g fill="#f0c040"><rect x="9" y="12" width="1.5" height="1.5"/><rect x="13" y="12" width="1.5" height="1.5"/><rect x="17" y="12" width="1.5" height="1.5"/><rect x="21" y="12" width="1.5" height="1.5"/><rect x="9" y="16" width="1.5" height="1.5"/><rect x="13" y="16" width="1.5" height="1.5"/><rect x="17" y="16" width="1.5" height="1.5"/><rect x="21" y="16" width="1.5" height="1.5"/><rect x="9" y="20" width="1.5" height="1.5"/><rect x="13" y="20" width="1.5" height="1.5"/><rect x="17" y="20" width="1.5" height="1.5"/></g><ellipse cx="6" cy="10" rx="5.5" ry="2.6" fill="#d8d020" stroke="#222" stroke-width="0.7"/><path d="M4 10 a3 1.4 0 0 0 6 0z" fill="#2a8a2a"/><path d="M7 2 l5 2 l-3 2z" fill="#e02020"/></svg>
<span class="t" style="font-size:12px;line-height:12px;color:#fff;letter-spacing:0.002px;left:632.50px;top:736.69px;">Microsoft Vi...</span>
<div style="left:600px;top:760px;width:111px;height:2px;background:#8A9BAB;"></div>
<svg style="left:724px;top:730px" width="24" height="22" viewBox="0 0 24 22"><g fill="#fff"><ellipse cx="17" cy="5" rx="5.5" ry="2.3"/><rect x="11.5" y="5" width="11" height="12"/><ellipse cx="17" cy="17" rx="5.5" ry="2.3"/></g><g stroke="#A4373A" stroke-width="0.9" fill="none"><path d="M11.5 9 a5.5 2.3 0 0 0 11 0 M11.5 13 a5.5 2.3 0 0 0 11 0"/></g><path d="M0 2.5 L14 0 V22 L0 19.5z" fill="#A4373A"/><text x="3.2" y="15.2" font-family="Liberation Sans" font-weight="bold" font-size="10.5" fill="#fff">A</text></svg>
<span class="t" style="font-size:12px;line-height:12px;color:#fff;letter-spacing:-0.363px;left:751.00px;top:736.69px;">Access</span>
<div style="left:719px;top:760px;width:111px;height:2px;background:#8A9BAB;"></div>
<svg style="left:843px;top:729px" width="26" height="28" viewBox="0 0 26 28"><path d="M1 3 L7 1.2 L8.5 3 H16 V20 H8 L8 25 L1 22.5z" fill="#F7D56E"/><path d="M8 3 H16 V20 H8z" fill="#FBE596"/><path d="M1 3 L8 5 V25 L1 22.5z" fill="#EFC24F"/><circle cx="16.5" cy="17" r="7.6" fill="#E8131B"/><path d="M12.6 20.4 V13.8 L16.5 17.6 L20.4 13.8 V20.4" fill="none" stroke="#fff" stroke-width="1.7"/></svg>
<span class="t" style="font-size:12px;line-height:12px;color:#fff;letter-spacing:-0.290px;left:871.00px;top:736.69px;">Bandeja de ...</span>
<div style="left:839px;top:760px;width:110px;height:2px;background:#8A9BAB;"></div>
<svg style="left:960px;top:730.5px" width="25" height="25" viewBox="-16 -16 32 32">
<circle r="15" fill="#DB4437"/>
<path d="M0 0 L-12.99 -7.5 A15 15 0 0 0 7.5 12.99 Z" fill="#0F9D58"/>
<path d="M0 0 L7.5 12.99 A15 15 0 0 0 12.99 -7.5 L0 -7.5 Z" fill="#FFCD40"/>
<path d="M-12.99 -7.5 A15 15 0 0 1 12.99 -7.5 L0 -7.5 Z" fill="#DB4437"/>
<circle r="7" fill="#fff"/><circle r="5.5" fill="#4285F4"/></svg>
<span class="t" style="font-size:12px;line-height:12px;color:#fff;letter-spacing:0.062px;left:990.00px;top:736.69px;">Subform th...</span>
<div style="left:958px;top:760px;width:110px;height:2px;background:#8A9BAB;"></div>
<svg style="left:1080px;top:730px" width="220" height="30" viewBox="0 0 220 30">
<path d="M2 16.5 L8 10.5 L14 16.5" fill="none" stroke="#fff" stroke-width="1.4"/>
<g><rect x="26" y="6" width="12" height="13" fill="#6f94c8" stroke="#c9d6ea" stroke-width="0.8"/><rect x="32" y="9" width="7" height="7" fill="#b9c4d3"/><path d="M28 21 h9 v2 h-9z" fill="#9aa6b6"/></g>
<g transform="translate(-4.5,0)"><path d="M50 7 L58 5 V21 L50 19z" fill="#E86A10"/><rect x="56" y="6" width="8" height="14" fill="#f08a30"/><circle cx="63" cy="16" r="6" fill="#F0661A" stroke="#fff" stroke-width="1.2"/><path d="M61.6 13.8 L63.4 12.6 V19.4" fill="none" stroke="#fff" stroke-width="1.3"/></g>
<g transform="translate(-3,0)" fill="none" stroke="#fff" stroke-width="1.2"><path d="M75 11 h3 l4 -4 v14 l-4 -4 h-3z"/><path d="M84.5 10.5 a5 5 0 0 1 0 7 M87 8 a8.5 8.5 0 0 1 0 12"/></g>
<g transform="translate(-5,0)"><rect x="104" y="9.5" width="13" height="8" fill="none" stroke="#fff" stroke-width="1.2"/><rect x="117.5" y="11.5" width="1.6" height="4" fill="#fff"/><rect x="105.5" y="11" width="8" height="5" fill="#fff"/><path d="M100 8 v3 M103 8 v3 M99 11 h5 v2.2 a2.5 2.5 0 0 1 -5 0z M101.5 15.5 v3" stroke="#fff" stroke-width="1.1" fill="none"/></g>
<g transform="translate(-2,0)"><g fill="none" stroke="#fff" stroke-width="1.4"><path d="M124 21 a14 14 0 0 1 14 -14"/><path d="M128 21 a10 10 0 0 1 10 -10"/><path d="M132 21 a6 6 0 0 1 6 -6"/></g><circle cx="137.5" cy="20" r="1.6" fill="#fff"/></g>
<circle cx="152" cy="15" r="7.6" fill="#E8131B"/><path d="M148.2 18.3 V11.9 L152 15.6 L155.8 11.9 V18.3" fill="none" stroke="#fff" stroke-width="1.7"/>
<g><path d="M175 5.5 l7 2.5 v6 c0 4 -3.5 7 -7 8.5 c-3.5 -1.500 -7 -4.500 -7 -8.500 v-6z" fill="#fff"/><path d="M175 5.500 v17 M168 13.500 h14" stroke="#1B1C1F" stroke-width="1.300"/><circle cx="179.500" cy="20" r="4.200" fill="#18a34a"/><path d="M177.500 20 l1.500 1.500 l2.600 -3" fill="none" stroke="#fff" stroke-width="1.100"/></g>
<g><circle cx="199" cy="15" r="7.400" fill="#f2c06a"/><path d="M191.700 16 a7.400 7.400 0 0 0 14.600 0 c-3 -3 -6 -2 -8 0 c-2 1.500 -4 1.500 -6.600 0z" fill="#4d7fc4"/></g>
</svg>
<span class="t" style="font-size:12px;line-height:12px;color:#fff;letter-spacing:-0.606px;left:1313.10px;top:731.19px;">17:20</span>
<span class="t" style="font-size:12px;line-height:12px;color:#fff;letter-spacing:-0.206px;left:1298.50px;top:748.69px;">31/08/2020</span>
<svg style="left:811px;top:641px" width="14" height="21" viewBox="-1 -1 14 21"><path d="M0 0 L0 16.5 L3.8 12.8 L6.4 18.6 L8.8 17.6 L6.3 11.9 L11.6 11.9 Z" fill="#fff" stroke="#000" stroke-width="1"/></svg>
</body></html>
